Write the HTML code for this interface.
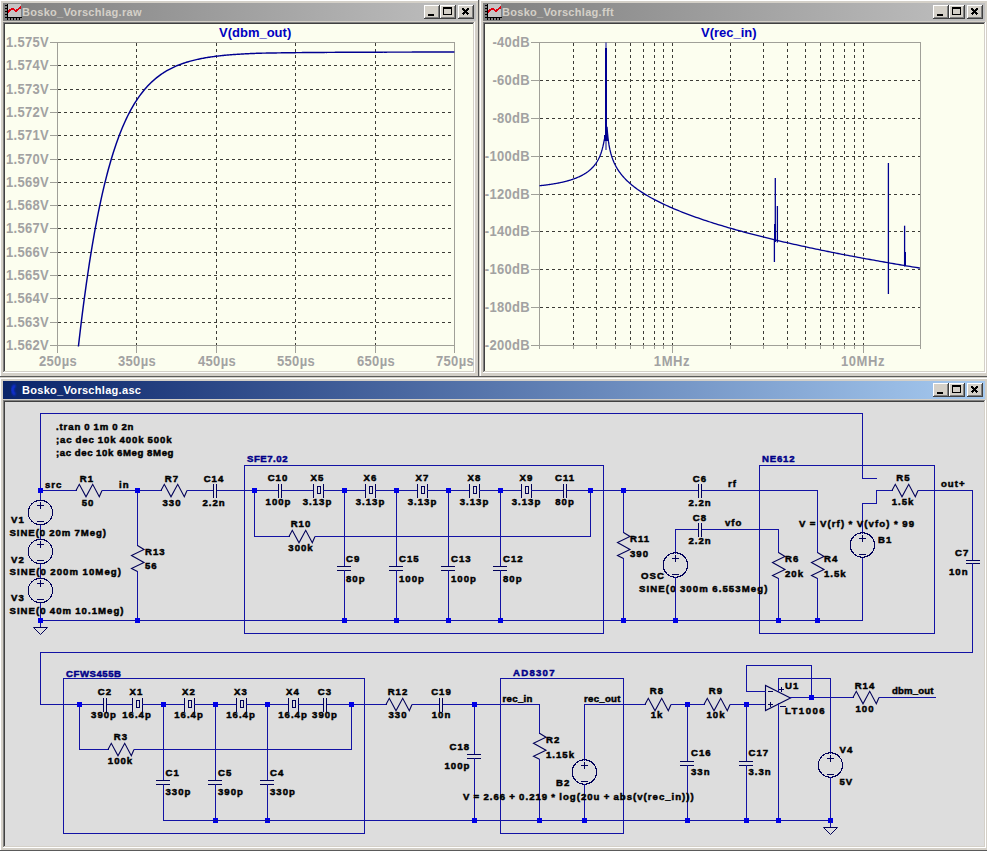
<!DOCTYPE html>
<html><head><meta charset="utf-8"><style>
html,body{margin:0;padding:0;width:987px;height:851px;overflow:hidden;background:#D4D0C8;}
svg{display:block;}
text{shape-rendering:auto;}
</style></head><body>
<svg width="987" height="851" viewBox="0 0 987 851" font-family="Liberation Sans, sans-serif" shape-rendering="crispEdges">
<rect x="0" y="0" width="987" height="851" fill="#D4D0C8"/>
<rect x="-1" y="-1" width="480" height="378" fill="#D4D0C8"/>
<rect x="-1" y="-1" width="480" height="1" fill="#D4D0C8"/>
<rect x="-1" y="-1" width="1" height="378" fill="#D4D0C8"/>
<rect x="0" y="0" width="478" height="1" fill="#FFFFFF"/>
<rect x="0" y="0" width="1" height="376" fill="#FFFFFF"/>
<rect x="-1" y="376" width="480" height="1" fill="#5A5A5A"/>
<rect x="478" y="-1" width="1" height="378" fill="#5A5A5A"/>
<defs><linearGradient id="g1" x1="0" x2="1" y1="0" y2="0"><stop offset="0" stop-color="#808080"/><stop offset="1" stop-color="#C0C0C0"/></linearGradient></defs>
<rect x="3" y="3" width="473" height="18" fill="url(#g1)"/>
<text x="22" y="16" font-size="11" fill="#D4D0C8" text-anchor="start" letter-spacing="0.3" font-weight="bold" >Bosko_Vorschlag.raw</text>
<rect x="458" y="5" width="16" height="14" fill="#D4D0C8"/>
<rect x="458" y="5" width="16" height="1" fill="#FFFFFF"/>
<rect x="458" y="5" width="1" height="14" fill="#FFFFFF"/>
<rect x="458" y="18" width="16" height="1" fill="#404040"/>
<rect x="473" y="5" width="1" height="14" fill="#404040"/>
<rect x="459" y="17" width="14" height="1" fill="#808080"/>
<rect x="472" y="6" width="1" height="12" fill="#808080"/>
<path d="M462.5 8.5 L468.5 14.5 M468.5 8.5 L462.5 14.5" stroke="#000" stroke-width="1.6"/>
<rect x="440" y="5" width="16" height="14" fill="#D4D0C8"/>
<rect x="440" y="5" width="16" height="1" fill="#FFFFFF"/>
<rect x="440" y="5" width="1" height="14" fill="#FFFFFF"/>
<rect x="440" y="18" width="16" height="1" fill="#404040"/>
<rect x="455" y="5" width="1" height="14" fill="#404040"/>
<rect x="441" y="17" width="14" height="1" fill="#808080"/>
<rect x="454" y="6" width="1" height="12" fill="#808080"/>
<rect x="443.5" y="7.5" width="8" height="7" fill="none" stroke="#000" stroke-width="1"/>
<rect x="443" y="7" width="9" height="2" fill="#000"/>
<rect x="424" y="5" width="16" height="14" fill="#D4D0C8"/>
<rect x="424" y="5" width="16" height="1" fill="#FFFFFF"/>
<rect x="424" y="5" width="1" height="14" fill="#FFFFFF"/>
<rect x="424" y="18" width="16" height="1" fill="#404040"/>
<rect x="439" y="5" width="1" height="14" fill="#404040"/>
<rect x="425" y="17" width="14" height="1" fill="#808080"/>
<rect x="438" y="6" width="1" height="12" fill="#808080"/>
<rect x="428" y="14" width="6" height="2" fill="#000"/>
<rect x="8" y="4" width="13" height="13" fill="#C4C4C4"/>
<rect x="7" y="4" width="1" height="16" fill="#000"/>
<rect x="5" y="17" width="17" height="1" fill="#000"/>
<rect x="5" y="5" width="2" height="1" fill="#000"/>
<rect x="5" y="8" width="2" height="1" fill="#000"/>
<rect x="5" y="11" width="2" height="1" fill="#000"/>
<rect x="5" y="14" width="2" height="1" fill="#000"/>
<rect x="7" y="18" width="1" height="2" fill="#000"/>
<rect x="10" y="18" width="1" height="2" fill="#000"/>
<rect x="13" y="18" width="1" height="2" fill="#000"/>
<rect x="16" y="18" width="1" height="2" fill="#000"/>
<rect x="19" y="18" width="1" height="2" fill="#000"/>
<path d="M8 12 L12 8.5 L16 11 L21 7" stroke="#E00010" stroke-width="1.8" fill="none"/>
<rect x="3" y="22" width="472" height="351" fill="#D4D0C8"/>
<rect x="3" y="22" width="472" height="1" fill="#808080"/>
<rect x="3" y="22" width="1" height="351" fill="#808080"/>
<rect x="4" y="23" width="470" height="1" fill="#404040"/>
<rect x="4" y="23" width="1" height="349" fill="#404040"/>
<rect x="3" y="372" width="472" height="1" fill="#FFFFFF"/>
<rect x="474" y="22" width="1" height="351" fill="#FFFFFF"/>
<rect x="4" y="371" width="470" height="1" fill="#D4D0C8"/>
<rect x="473" y="23" width="1" height="349" fill="#D4D0C8"/>
<rect x="5" y="24" width="468" height="347" fill="#FCFEEF"/>
<rect x="479" y="-1" width="512" height="378" fill="#D4D0C8"/>
<rect x="479" y="-1" width="512" height="1" fill="#D4D0C8"/>
<rect x="479" y="-1" width="1" height="378" fill="#D4D0C8"/>
<rect x="480" y="0" width="510" height="1" fill="#FFFFFF"/>
<rect x="480" y="0" width="1" height="376" fill="#FFFFFF"/>
<rect x="479" y="376" width="512" height="1" fill="#5A5A5A"/>
<rect x="990" y="-1" width="1" height="378" fill="#5A5A5A"/>
<defs><linearGradient id="g2" x1="0" x2="1" y1="0" y2="0"><stop offset="0" stop-color="#808080"/><stop offset="1" stop-color="#C0C0C0"/></linearGradient></defs>
<rect x="483" y="3" width="502" height="18" fill="url(#g2)"/>
<text x="502" y="16" font-size="11" fill="#D4D0C8" text-anchor="start" letter-spacing="0.3" font-weight="bold" >Bosko_Vorschlag.fft</text>
<rect x="967" y="5" width="16" height="14" fill="#D4D0C8"/>
<rect x="967" y="5" width="16" height="1" fill="#FFFFFF"/>
<rect x="967" y="5" width="1" height="14" fill="#FFFFFF"/>
<rect x="967" y="18" width="16" height="1" fill="#404040"/>
<rect x="982" y="5" width="1" height="14" fill="#404040"/>
<rect x="968" y="17" width="14" height="1" fill="#808080"/>
<rect x="981" y="6" width="1" height="12" fill="#808080"/>
<path d="M971.5 8.5 L977.5 14.5 M977.5 8.5 L971.5 14.5" stroke="#000" stroke-width="1.6"/>
<rect x="949" y="5" width="16" height="14" fill="#D4D0C8"/>
<rect x="949" y="5" width="16" height="1" fill="#FFFFFF"/>
<rect x="949" y="5" width="1" height="14" fill="#FFFFFF"/>
<rect x="949" y="18" width="16" height="1" fill="#404040"/>
<rect x="964" y="5" width="1" height="14" fill="#404040"/>
<rect x="950" y="17" width="14" height="1" fill="#808080"/>
<rect x="963" y="6" width="1" height="12" fill="#808080"/>
<rect x="952.5" y="7.5" width="8" height="7" fill="none" stroke="#000" stroke-width="1"/>
<rect x="952" y="7" width="9" height="2" fill="#000"/>
<rect x="933" y="5" width="16" height="14" fill="#D4D0C8"/>
<rect x="933" y="5" width="16" height="1" fill="#FFFFFF"/>
<rect x="933" y="5" width="1" height="14" fill="#FFFFFF"/>
<rect x="933" y="18" width="16" height="1" fill="#404040"/>
<rect x="948" y="5" width="1" height="14" fill="#404040"/>
<rect x="934" y="17" width="14" height="1" fill="#808080"/>
<rect x="947" y="6" width="1" height="12" fill="#808080"/>
<rect x="937" y="14" width="6" height="2" fill="#000"/>
<rect x="488" y="4" width="13" height="13" fill="#C4C4C4"/>
<rect x="487" y="4" width="1" height="16" fill="#000"/>
<rect x="485" y="17" width="17" height="1" fill="#000"/>
<rect x="485" y="5" width="2" height="1" fill="#000"/>
<rect x="485" y="8" width="2" height="1" fill="#000"/>
<rect x="485" y="11" width="2" height="1" fill="#000"/>
<rect x="485" y="14" width="2" height="1" fill="#000"/>
<rect x="487" y="18" width="1" height="2" fill="#000"/>
<rect x="490" y="18" width="1" height="2" fill="#000"/>
<rect x="493" y="18" width="1" height="2" fill="#000"/>
<rect x="496" y="18" width="1" height="2" fill="#000"/>
<rect x="499" y="18" width="1" height="2" fill="#000"/>
<path d="M488 12 L492 8.5 L496 11 L501 7" stroke="#E00010" stroke-width="1.8" fill="none"/>
<rect x="483" y="22" width="503" height="351" fill="#D4D0C8"/>
<rect x="483" y="22" width="503" height="1" fill="#808080"/>
<rect x="483" y="22" width="1" height="351" fill="#808080"/>
<rect x="484" y="23" width="501" height="1" fill="#404040"/>
<rect x="484" y="23" width="1" height="349" fill="#404040"/>
<rect x="483" y="372" width="503" height="1" fill="#FFFFFF"/>
<rect x="985" y="22" width="1" height="351" fill="#FFFFFF"/>
<rect x="484" y="371" width="501" height="1" fill="#D4D0C8"/>
<rect x="984" y="23" width="1" height="349" fill="#D4D0C8"/>
<rect x="485" y="24" width="499" height="347" fill="#FCFEEF"/>
<rect x="-1" y="377" width="992" height="474" fill="#D4D0C8"/>
<rect x="-1" y="377" width="992" height="1" fill="#D4D0C8"/>
<rect x="-1" y="377" width="1" height="474" fill="#D4D0C8"/>
<rect x="0" y="378" width="990" height="1" fill="#FFFFFF"/>
<rect x="0" y="378" width="1" height="472" fill="#FFFFFF"/>
<rect x="-1" y="850" width="992" height="1" fill="#5A5A5A"/>
<rect x="990" y="377" width="1" height="474" fill="#5A5A5A"/>
<defs><linearGradient id="g3" x1="0" x2="1" y1="0" y2="0"><stop offset="0" stop-color="#0A246A"/><stop offset="1" stop-color="#A6CAF0"/></linearGradient></defs>
<rect x="3" y="381" width="982" height="18" fill="url(#g3)"/>
<text x="22" y="394" font-size="11" fill="#FFFFFF" text-anchor="start" letter-spacing="0.3" font-weight="bold" >Bosko_Vorschlag.asc</text>
<rect x="967" y="383" width="16" height="14" fill="#D4D0C8"/>
<rect x="967" y="383" width="16" height="1" fill="#FFFFFF"/>
<rect x="967" y="383" width="1" height="14" fill="#FFFFFF"/>
<rect x="967" y="396" width="16" height="1" fill="#404040"/>
<rect x="982" y="383" width="1" height="14" fill="#404040"/>
<rect x="968" y="395" width="14" height="1" fill="#808080"/>
<rect x="981" y="384" width="1" height="12" fill="#808080"/>
<path d="M971.5 386.5 L977.5 392.5 M977.5 386.5 L971.5 392.5" stroke="#000" stroke-width="1.6"/>
<rect x="949" y="383" width="16" height="14" fill="#D4D0C8"/>
<rect x="949" y="383" width="16" height="1" fill="#FFFFFF"/>
<rect x="949" y="383" width="1" height="14" fill="#FFFFFF"/>
<rect x="949" y="396" width="16" height="1" fill="#404040"/>
<rect x="964" y="383" width="1" height="14" fill="#404040"/>
<rect x="950" y="395" width="14" height="1" fill="#808080"/>
<rect x="963" y="384" width="1" height="12" fill="#808080"/>
<rect x="952.5" y="385.5" width="8" height="7" fill="none" stroke="#000" stroke-width="1"/>
<rect x="952" y="385" width="9" height="2" fill="#000"/>
<rect x="933" y="383" width="16" height="14" fill="#D4D0C8"/>
<rect x="933" y="383" width="16" height="1" fill="#FFFFFF"/>
<rect x="933" y="383" width="1" height="14" fill="#FFFFFF"/>
<rect x="933" y="396" width="16" height="1" fill="#404040"/>
<rect x="948" y="383" width="1" height="14" fill="#404040"/>
<rect x="934" y="395" width="14" height="1" fill="#808080"/>
<rect x="947" y="384" width="1" height="12" fill="#808080"/>
<rect x="937" y="392" width="6" height="2" fill="#000"/>
<defs><filter id="bl" x="-50%" y="-50%" width="200%" height="200%"><feGaussianBlur stdDeviation="1.2"/></filter></defs>
<path d="M15 385 Q10 390 15 395" stroke="#1030F0" stroke-width="2.5" fill="none" filter="url(#bl)" shape-rendering="auto"/>
<rect x="3" y="400" width="983" height="448" fill="#D4D0C8"/>
<rect x="3" y="400" width="983" height="1" fill="#808080"/>
<rect x="3" y="400" width="1" height="448" fill="#808080"/>
<rect x="4" y="401" width="981" height="1" fill="#404040"/>
<rect x="4" y="401" width="1" height="446" fill="#404040"/>
<rect x="3" y="847" width="983" height="1" fill="#FFFFFF"/>
<rect x="985" y="400" width="1" height="448" fill="#FFFFFF"/>
<rect x="4" y="846" width="981" height="1" fill="#D4D0C8"/>
<rect x="984" y="401" width="1" height="446" fill="#D4D0C8"/>
<rect x="5" y="402" width="979" height="444" fill="#DDDDDD"/>
<rect x="50" y="42" width="8" height="1" fill="#A0A098"/>
<text transform="translate(49 47) scale(1.0 1.07)" x="0" y="0" font-size="13" fill="#A2A2A2" text-anchor="end" letter-spacing="0.3" font-weight="bold" >1.575V</text>
<line x1="58" y1="65.5" x2="454" y2="65.5" stroke="#3C3C36" stroke-width="1" stroke-dasharray="3 3"/>
<rect x="50" y="65" width="8" height="1" fill="#A0A098"/>
<text transform="translate(49 70) scale(1.0 1.07)" x="0" y="0" font-size="13" fill="#A2A2A2" text-anchor="end" letter-spacing="0.3" font-weight="bold" >1.574V</text>
<line x1="58" y1="89.5" x2="454" y2="89.5" stroke="#3C3C36" stroke-width="1" stroke-dasharray="3 3"/>
<rect x="50" y="89" width="8" height="1" fill="#A0A098"/>
<text transform="translate(49 94) scale(1.0 1.07)" x="0" y="0" font-size="13" fill="#A2A2A2" text-anchor="end" letter-spacing="0.3" font-weight="bold" >1.573V</text>
<line x1="58" y1="112.5" x2="454" y2="112.5" stroke="#3C3C36" stroke-width="1" stroke-dasharray="3 3"/>
<rect x="50" y="112" width="8" height="1" fill="#A0A098"/>
<text transform="translate(49 117) scale(1.0 1.07)" x="0" y="0" font-size="13" fill="#A2A2A2" text-anchor="end" letter-spacing="0.3" font-weight="bold" >1.572V</text>
<line x1="58" y1="135.5" x2="454" y2="135.5" stroke="#3C3C36" stroke-width="1" stroke-dasharray="3 3"/>
<rect x="50" y="135" width="8" height="1" fill="#A0A098"/>
<text transform="translate(49 140) scale(1.0 1.07)" x="0" y="0" font-size="13" fill="#A2A2A2" text-anchor="end" letter-spacing="0.3" font-weight="bold" >1.571V</text>
<line x1="58" y1="159.5" x2="454" y2="159.5" stroke="#3C3C36" stroke-width="1" stroke-dasharray="3 3"/>
<rect x="50" y="159" width="8" height="1" fill="#A0A098"/>
<text transform="translate(49 164) scale(1.0 1.07)" x="0" y="0" font-size="13" fill="#A2A2A2" text-anchor="end" letter-spacing="0.3" font-weight="bold" >1.570V</text>
<line x1="58" y1="182.5" x2="454" y2="182.5" stroke="#3C3C36" stroke-width="1" stroke-dasharray="3 3"/>
<rect x="50" y="182" width="8" height="1" fill="#A0A098"/>
<text transform="translate(49 187) scale(1.0 1.07)" x="0" y="0" font-size="13" fill="#A2A2A2" text-anchor="end" letter-spacing="0.3" font-weight="bold" >1.569V</text>
<line x1="58" y1="205.5" x2="454" y2="205.5" stroke="#3C3C36" stroke-width="1" stroke-dasharray="3 3"/>
<rect x="50" y="205" width="8" height="1" fill="#A0A098"/>
<text transform="translate(49 210) scale(1.0 1.07)" x="0" y="0" font-size="13" fill="#A2A2A2" text-anchor="end" letter-spacing="0.3" font-weight="bold" >1.568V</text>
<line x1="58" y1="228.5" x2="454" y2="228.5" stroke="#3C3C36" stroke-width="1" stroke-dasharray="3 3"/>
<rect x="50" y="228" width="8" height="1" fill="#A0A098"/>
<text transform="translate(49 233) scale(1.0 1.07)" x="0" y="0" font-size="13" fill="#A2A2A2" text-anchor="end" letter-spacing="0.3" font-weight="bold" >1.567V</text>
<line x1="58" y1="252.5" x2="454" y2="252.5" stroke="#3C3C36" stroke-width="1" stroke-dasharray="3 3"/>
<rect x="50" y="252" width="8" height="1" fill="#A0A098"/>
<text transform="translate(49 257) scale(1.0 1.07)" x="0" y="0" font-size="13" fill="#A2A2A2" text-anchor="end" letter-spacing="0.3" font-weight="bold" >1.566V</text>
<line x1="58" y1="275.5" x2="454" y2="275.5" stroke="#3C3C36" stroke-width="1" stroke-dasharray="3 3"/>
<rect x="50" y="275" width="8" height="1" fill="#A0A098"/>
<text transform="translate(49 280) scale(1.0 1.07)" x="0" y="0" font-size="13" fill="#A2A2A2" text-anchor="end" letter-spacing="0.3" font-weight="bold" >1.565V</text>
<line x1="58" y1="298.5" x2="454" y2="298.5" stroke="#3C3C36" stroke-width="1" stroke-dasharray="3 3"/>
<rect x="50" y="298" width="8" height="1" fill="#A0A098"/>
<text transform="translate(49 303) scale(1.0 1.07)" x="0" y="0" font-size="13" fill="#A2A2A2" text-anchor="end" letter-spacing="0.3" font-weight="bold" >1.564V</text>
<line x1="58" y1="322.5" x2="454" y2="322.5" stroke="#3C3C36" stroke-width="1" stroke-dasharray="3 3"/>
<rect x="50" y="322" width="8" height="1" fill="#A0A098"/>
<text transform="translate(49 327) scale(1.0 1.07)" x="0" y="0" font-size="13" fill="#A2A2A2" text-anchor="end" letter-spacing="0.3" font-weight="bold" >1.563V</text>
<rect x="50" y="345" width="8" height="1" fill="#A0A098"/>
<text transform="translate(49 350) scale(1.0 1.07)" x="0" y="0" font-size="13" fill="#A2A2A2" text-anchor="end" letter-spacing="0.3" font-weight="bold" >1.562V</text>
<rect x="57" y="345" width="1" height="8" fill="#A0A098"/>
<text transform="translate(58 366) scale(1.0 1.07)" x="0" y="0" font-size="13" fill="#A2A2A2" text-anchor="middle" letter-spacing="0.3" font-weight="bold" >250µs</text>
<line x1="136.5" y1="43" x2="136.5" y2="345" stroke="#3C3C36" stroke-width="1" stroke-dasharray="3 3"/>
<rect x="136" y="345" width="1" height="8" fill="#A0A098"/>
<text transform="translate(137 366) scale(1.0 1.07)" x="0" y="0" font-size="13" fill="#A2A2A2" text-anchor="middle" letter-spacing="0.3" font-weight="bold" >350µs</text>
<line x1="216.5" y1="43" x2="216.5" y2="345" stroke="#3C3C36" stroke-width="1" stroke-dasharray="3 3"/>
<rect x="216" y="345" width="1" height="8" fill="#A0A098"/>
<text transform="translate(217 366) scale(1.0 1.07)" x="0" y="0" font-size="13" fill="#A2A2A2" text-anchor="middle" letter-spacing="0.3" font-weight="bold" >450µs</text>
<line x1="295.5" y1="43" x2="295.5" y2="345" stroke="#3C3C36" stroke-width="1" stroke-dasharray="3 3"/>
<rect x="295" y="345" width="1" height="8" fill="#A0A098"/>
<text transform="translate(296 366) scale(1.0 1.07)" x="0" y="0" font-size="13" fill="#A2A2A2" text-anchor="middle" letter-spacing="0.3" font-weight="bold" >550µs</text>
<line x1="375.5" y1="43" x2="375.5" y2="345" stroke="#3C3C36" stroke-width="1" stroke-dasharray="3 3"/>
<rect x="375" y="345" width="1" height="8" fill="#A0A098"/>
<text transform="translate(376 366) scale(1.0 1.07)" x="0" y="0" font-size="13" fill="#A2A2A2" text-anchor="middle" letter-spacing="0.3" font-weight="bold" >650µs</text>
<rect x="454" y="345" width="1" height="8" fill="#A0A098"/>
<text transform="translate(455 366) scale(1.0 1.07)" x="0" y="0" font-size="13" fill="#A2A2A2" text-anchor="middle" letter-spacing="0.3" font-weight="bold" >750µs</text>
<rect x="57" y="42" width="398" height="1" fill="#A0A098"/>
<rect x="57" y="345" width="398" height="1" fill="#A0A098"/>
<rect x="57" y="42" width="1" height="304" fill="#A0A098"/>
<rect x="454" y="42" width="1" height="304" fill="#A0A098"/>
<text x="219" y="36.6" font-size="13" fill="#0000C0" text-anchor="start" letter-spacing="0" font-weight="bold" >V(dbm_out)</text>
<polyline points="78.4,346.52 79.4,337.84 80.4,329.40 81.4,321.19 82.4,313.21 83.4,305.45 84.4,297.90 85.4,290.57 86.4,283.44 87.4,276.51 88.4,269.77 89.4,263.23 90.4,256.87 91.4,250.69 92.4,244.69 93.4,238.86 94.4,233.20 95.4,227.71 96.4,222.37 97.4,217.18 98.4,212.15 99.4,207.27 100.4,202.53 101.4,197.92 102.4,193.46 103.4,189.12 104.4,184.92 105.4,180.83 106.4,176.87 107.4,173.03 108.4,169.31 109.4,165.69 110.4,162.18 111.4,158.78 112.4,155.49 113.4,152.29 114.4,149.19 115.4,146.18 116.4,143.26 117.4,140.44 118.4,137.69 119.4,135.04 120.4,132.46 121.4,129.97 122.4,127.55 123.4,125.20 124.4,122.93 125.4,120.72 126.4,118.59 127.4,116.52 128.4,114.52 129.4,112.57 130.4,110.69 131.4,108.87 132.4,107.10 133.4,105.39 134.4,103.73 135.4,102.12 136.4,100.57 137.4,99.06 138.4,97.60 139.4,96.18 140.4,94.81 141.4,93.49 142.4,92.20 143.4,90.96 144.4,89.75 145.4,88.58 146.4,87.45 147.4,86.35 148.4,85.29 149.4,84.26 150.4,83.27 151.4,82.30 152.4,81.37 153.4,80.46 154.4,79.59 155.4,78.74 156.4,77.92 157.4,77.12 158.4,76.35 159.4,75.60 160.4,74.88 161.4,74.18 162.4,73.50 163.4,72.84 164.4,72.21 165.4,71.59 166.4,70.99 167.4,70.41 168.4,69.85 169.4,69.31 170.4,68.79 171.4,68.28 172.4,67.78 173.4,67.31 174.4,66.84 175.4,66.40 176.4,65.96 177.4,65.54 178.4,65.13 179.4,64.74 180.4,64.36 181.4,63.99 182.4,63.63 183.4,63.28 184.4,62.94 185.4,62.61 186.4,62.30 187.4,61.99 188.4,61.69 189.4,61.41 190.4,61.13 191.4,60.86 192.4,60.59 193.4,60.34 194.4,60.09 195.4,59.85 196.4,59.62 197.4,59.40 198.4,59.18 199.4,58.97 200.4,58.77 201.4,58.57 202.4,58.37 203.4,58.19 204.4,58.01 205.4,57.83 206.4,57.66 207.4,57.50 208.4,57.34 209.4,57.18 210.4,57.03 211.4,56.89 212.4,56.74 213.4,56.61 214.4,56.47 215.4,56.34 216.4,56.22 217.4,56.10 218.4,55.98 219.4,55.86 220.4,55.75 221.4,55.65 222.4,55.54 223.4,55.44 224.4,55.34 225.4,55.24 226.4,55.15 227.4,55.06 228.4,54.97 229.4,54.89 230.4,54.81 231.4,54.73 232.4,54.65 233.4,54.57 234.4,54.50 235.4,54.43 236.4,54.36 237.4,54.29 238.4,54.23 239.4,54.16 240.4,54.10 241.4,54.04 242.4,53.99 243.4,53.93 244.4,53.87 245.4,53.82 246.4,53.77 247.4,53.72 248.4,53.67 249.4,53.62 250.4,53.58 251.4,53.53 252.4,53.49 253.4,53.45 254.4,53.41 255.4,53.37 256.4,53.33 257.4,53.29 258.4,53.26 259.4,53.22 260.4,53.19 261.4,53.17 262.4,53.15 263.4,53.13 264.4,53.12 265.4,53.10 266.4,53.08 267.4,53.06 268.4,53.04 269.4,53.03 270.4,53.01 271.4,52.99 272.4,52.98 273.4,52.96 274.4,52.94 275.4,52.93 276.4,52.91 277.4,52.90 278.4,52.88 279.4,52.87 280.4,52.85 281.4,52.84 282.4,52.83 283.4,52.81 284.4,52.80 285.4,52.79 286.4,52.77 287.4,52.76 288.4,52.75 289.4,52.74 290.4,52.72 291.4,52.71 292.4,52.70 293.4,52.69 294.4,52.68 295.4,52.67 296.4,52.65 297.4,52.64 298.4,52.63 299.4,52.62 300.4,52.61 301.4,52.60 302.4,52.59 303.4,52.58 304.4,52.57 305.4,52.56 306.4,52.55 307.4,52.54 308.4,52.54 309.4,52.53 310.4,52.52 311.4,52.51 312.4,52.50 313.4,52.49 314.4,52.48 315.4,52.48 316.4,52.47 317.4,52.46 318.4,52.45 319.4,52.45 320.4,52.44 321.4,52.43 322.4,52.42 323.4,52.42 324.4,52.41 325.4,52.40 326.4,52.40 327.4,52.39 328.4,52.38 329.4,52.38 330.4,52.37 331.4,52.37 332.4,52.36 333.4,52.35 334.4,52.35 335.4,52.34 336.4,52.34 337.4,52.33 338.4,52.33 339.4,52.32 340.4,52.31 341.4,52.31 342.4,52.30 343.4,52.30 344.4,52.29 345.4,52.29 346.4,52.28 347.4,52.28 348.4,52.28 349.4,52.27 350.4,52.27 351.4,52.26 352.4,52.26 353.4,52.25 354.4,52.25 355.4,52.24 356.4,52.24 357.4,52.24 358.4,52.23 359.4,52.23 360.4,52.23 361.4,52.22 362.4,52.22 363.4,52.21 364.4,52.21 365.4,52.21 366.4,52.20 367.4,52.20 368.4,52.20 369.4,52.19 370.4,52.19 371.4,52.19 372.4,52.18 373.4,52.18 374.4,52.18 375.4,52.18 376.4,52.17 377.4,52.17 378.4,52.17 379.4,52.16 380.4,52.16 381.4,52.16 382.4,52.16 383.4,52.15 384.4,52.15 385.4,52.15 386.4,52.15 387.4,52.14 388.4,52.14 389.4,52.14 390.4,52.14 391.4,52.13 392.4,52.13 393.4,52.13 394.4,52.13 395.4,52.13 396.4,52.12 397.4,52.12 398.4,52.12 399.4,52.12 400.4,52.12 401.4,52.11 402.4,52.11 403.4,52.11 404.4,52.11 405.4,52.11 406.4,52.10 407.4,52.10 408.4,52.10 409.4,52.10 410.4,52.10 411.4,52.10 412.4,52.09 413.4,52.09 414.4,52.09 415.4,52.09 416.4,52.09 417.4,52.09 418.4,52.09 419.4,52.08 420.4,52.08 421.4,52.08 422.4,52.08 423.4,52.08 424.4,52.08 425.4,52.08 426.4,52.07 427.4,52.07 428.4,52.07 429.4,52.07 430.4,52.07 431.4,52.07 432.4,52.07 433.4,52.07 434.4,52.07 435.4,52.06 436.4,52.06 437.4,52.06 438.4,52.06 439.4,52.06 440.4,52.06 441.4,52.06 442.4,52.06 443.4,52.06 444.4,52.06 445.4,52.05 446.4,52.05 447.4,52.05 448.4,52.05 449.4,52.05 450.4,52.05 451.4,52.05 452.4,52.05 453.4,52.05 454.4,52.05" fill="none" stroke="#000090" stroke-width="1.45" shape-rendering="auto"/>
<rect x="531" y="42" width="9" height="1" fill="#A0A098"/>
<text transform="translate(530 47) scale(1.0 1.07)" x="0" y="0" font-size="13" fill="#A2A2A2" text-anchor="end" letter-spacing="0.3" font-weight="bold" >-40dB</text>
<line x1="540" y1="80.5" x2="920" y2="80.5" stroke="#3C3C36" stroke-width="1" stroke-dasharray="3 3"/>
<rect x="531" y="80" width="9" height="1" fill="#A0A098"/>
<text transform="translate(530 85) scale(1.0 1.07)" x="0" y="0" font-size="13" fill="#A2A2A2" text-anchor="end" letter-spacing="0.3" font-weight="bold" >-60dB</text>
<line x1="540" y1="118.5" x2="920" y2="118.5" stroke="#3C3C36" stroke-width="1" stroke-dasharray="3 3"/>
<rect x="531" y="118" width="9" height="1" fill="#A0A098"/>
<text transform="translate(530 123) scale(1.0 1.07)" x="0" y="0" font-size="13" fill="#A2A2A2" text-anchor="end" letter-spacing="0.3" font-weight="bold" >-80dB</text>
<line x1="540" y1="156.5" x2="920" y2="156.5" stroke="#3C3C36" stroke-width="1" stroke-dasharray="3 3"/>
<rect x="531" y="156" width="9" height="1" fill="#A0A098"/>
<text transform="translate(530 161) scale(1.0 1.07)" x="0" y="0" font-size="13" fill="#A2A2A2" text-anchor="end" letter-spacing="0.3" font-weight="bold" >-100dB</text>
<line x1="540" y1="194.5" x2="920" y2="194.5" stroke="#3C3C36" stroke-width="1" stroke-dasharray="3 3"/>
<rect x="531" y="194" width="9" height="1" fill="#A0A098"/>
<text transform="translate(530 199) scale(1.0 1.07)" x="0" y="0" font-size="13" fill="#A2A2A2" text-anchor="end" letter-spacing="0.3" font-weight="bold" >-120dB</text>
<line x1="540" y1="231.5" x2="920" y2="231.5" stroke="#3C3C36" stroke-width="1" stroke-dasharray="3 3"/>
<rect x="531" y="231" width="9" height="1" fill="#A0A098"/>
<text transform="translate(530 236) scale(1.0 1.07)" x="0" y="0" font-size="13" fill="#A2A2A2" text-anchor="end" letter-spacing="0.3" font-weight="bold" >-140dB</text>
<line x1="540" y1="269.5" x2="920" y2="269.5" stroke="#3C3C36" stroke-width="1" stroke-dasharray="3 3"/>
<rect x="531" y="269" width="9" height="1" fill="#A0A098"/>
<text transform="translate(530 274) scale(1.0 1.07)" x="0" y="0" font-size="13" fill="#A2A2A2" text-anchor="end" letter-spacing="0.3" font-weight="bold" >-160dB</text>
<line x1="540" y1="307.5" x2="920" y2="307.5" stroke="#3C3C36" stroke-width="1" stroke-dasharray="3 3"/>
<rect x="531" y="307" width="9" height="1" fill="#A0A098"/>
<text transform="translate(530 312) scale(1.0 1.07)" x="0" y="0" font-size="13" fill="#A2A2A2" text-anchor="end" letter-spacing="0.3" font-weight="bold" >-180dB</text>
<rect x="531" y="345" width="9" height="1" fill="#A0A098"/>
<text transform="translate(530 350) scale(1.0 1.07)" x="0" y="0" font-size="13" fill="#A2A2A2" text-anchor="end" letter-spacing="0.3" font-weight="bold" >-200dB</text>
<line x1="573.5" y1="43" x2="573.5" y2="345" stroke="#3C3C36" stroke-width="1" stroke-dasharray="3 3"/>
<rect x="573" y="345" width="1" height="4" fill="#A0A098"/>
<line x1="596.5" y1="43" x2="596.5" y2="345" stroke="#3C3C36" stroke-width="1" stroke-dasharray="3 3"/>
<rect x="596" y="345" width="1" height="4" fill="#A0A098"/>
<line x1="615.5" y1="43" x2="615.5" y2="345" stroke="#3C3C36" stroke-width="1" stroke-dasharray="3 3"/>
<rect x="615" y="345" width="1" height="4" fill="#A0A098"/>
<line x1="630.5" y1="43" x2="630.5" y2="345" stroke="#3C3C36" stroke-width="1" stroke-dasharray="3 3"/>
<rect x="630" y="345" width="1" height="4" fill="#A0A098"/>
<line x1="643.5" y1="43" x2="643.5" y2="345" stroke="#3C3C36" stroke-width="1" stroke-dasharray="3 3"/>
<rect x="643" y="345" width="1" height="4" fill="#A0A098"/>
<line x1="654.5" y1="43" x2="654.5" y2="345" stroke="#3C3C36" stroke-width="1" stroke-dasharray="3 3"/>
<rect x="654" y="345" width="1" height="4" fill="#A0A098"/>
<line x1="663.5" y1="43" x2="663.5" y2="345" stroke="#3C3C36" stroke-width="1" stroke-dasharray="3 3"/>
<rect x="663" y="345" width="1" height="4" fill="#A0A098"/>
<line x1="672.5" y1="43" x2="672.5" y2="345" stroke="#3C3C36" stroke-width="1" stroke-dasharray="3 3"/>
<rect x="672" y="345" width="1" height="8" fill="#A0A098"/>
<line x1="730.5" y1="43" x2="730.5" y2="345" stroke="#3C3C36" stroke-width="1" stroke-dasharray="3 3"/>
<rect x="730" y="345" width="1" height="4" fill="#A0A098"/>
<line x1="763.5" y1="43" x2="763.5" y2="345" stroke="#3C3C36" stroke-width="1" stroke-dasharray="3 3"/>
<rect x="763" y="345" width="1" height="4" fill="#A0A098"/>
<line x1="787.5" y1="43" x2="787.5" y2="345" stroke="#3C3C36" stroke-width="1" stroke-dasharray="3 3"/>
<rect x="787" y="345" width="1" height="4" fill="#A0A098"/>
<line x1="805.5" y1="43" x2="805.5" y2="345" stroke="#3C3C36" stroke-width="1" stroke-dasharray="3 3"/>
<rect x="805" y="345" width="1" height="4" fill="#A0A098"/>
<line x1="820.5" y1="43" x2="820.5" y2="345" stroke="#3C3C36" stroke-width="1" stroke-dasharray="3 3"/>
<rect x="820" y="345" width="1" height="4" fill="#A0A098"/>
<line x1="833.5" y1="43" x2="833.5" y2="345" stroke="#3C3C36" stroke-width="1" stroke-dasharray="3 3"/>
<rect x="833" y="345" width="1" height="4" fill="#A0A098"/>
<line x1="844.5" y1="43" x2="844.5" y2="345" stroke="#3C3C36" stroke-width="1" stroke-dasharray="3 3"/>
<rect x="844" y="345" width="1" height="4" fill="#A0A098"/>
<line x1="854.5" y1="43" x2="854.5" y2="345" stroke="#3C3C36" stroke-width="1" stroke-dasharray="3 3"/>
<rect x="854" y="345" width="1" height="4" fill="#A0A098"/>
<line x1="863.5" y1="43" x2="863.5" y2="345" stroke="#3C3C36" stroke-width="1" stroke-dasharray="3 3"/>
<rect x="863" y="345" width="1" height="8" fill="#A0A098"/>
<rect x="539" y="345" width="1" height="4" fill="#A0A098"/>
<rect x="920" y="345" width="1" height="4" fill="#A0A098"/>
<text transform="translate(672 366) scale(1.0 1.07)" x="0" y="0" font-size="13" fill="#A2A2A2" text-anchor="middle" letter-spacing="0.6" font-weight="bold" >1MHz</text>
<text transform="translate(863 366) scale(1.0 1.07)" x="0" y="0" font-size="13" fill="#A2A2A2" text-anchor="middle" letter-spacing="0.6" font-weight="bold" >10MHz</text>
<rect x="539" y="42" width="382" height="1" fill="#A0A098"/>
<rect x="539" y="345" width="382" height="1" fill="#A0A098"/>
<rect x="539" y="42" width="1" height="304" fill="#A0A098"/>
<rect x="920" y="42" width="1" height="304" fill="#A0A098"/>
<text x="701" y="36.6" font-size="13" fill="#0000C0" text-anchor="start" letter-spacing="0" font-weight="bold" >V(rec_in)</text>
<path d="M539.50 185.73 L540.00 185.68 L540.50 185.63 L541.00 185.58 L541.50 185.52 L542.00 185.47 L542.50 185.41 L543.00 185.35 L543.50 185.29 L544.00 185.24 L544.50 185.18 L545.00 185.11 L545.50 185.05 L546.00 184.99 L546.50 184.92 L547.00 184.86 L547.50 184.79 L548.00 184.72 L548.50 184.66 L549.00 184.58 L549.50 184.51 L550.00 184.44 L550.50 184.37 L551.00 184.29 L551.50 184.22 L552.00 184.14 L552.50 184.06 L553.00 183.98 L553.50 183.90 L554.00 183.81 L554.50 183.73 L555.00 183.64 L555.50 183.55 L556.00 183.46 L556.50 183.37 L557.00 183.28 L557.50 183.19 L558.00 183.09 L558.50 182.99 L559.00 182.89 L559.50 182.79 L560.00 182.69 L560.50 182.58 L561.00 182.48 L561.50 182.37 L562.00 182.26 L562.50 182.14 L563.00 182.03 L563.50 181.91 L564.00 181.79 L564.50 181.67 L565.00 181.55 L565.50 181.42 L566.00 181.29 L566.50 181.16 L567.00 181.02 L567.50 180.89 L568.00 180.75 L568.50 180.61 L569.00 180.46 L569.50 180.31 L570.00 180.16 L570.50 180.01 L571.00 179.85 L571.50 179.69 L572.00 179.53 L572.50 179.36 L573.00 179.19 L573.50 179.01 L574.00 178.83 L574.50 178.65 L575.00 178.46 L575.50 178.27 L576.00 178.08 L576.50 177.88 L577.00 177.68 L577.50 177.47 L578.00 177.25 L578.50 177.03 L579.00 176.81 L579.50 176.58 L580.00 176.34 L580.50 176.10 L581.00 175.85 L581.50 175.60 L582.00 175.34 L582.50 175.07 L583.00 174.79 L583.50 174.51 L584.00 174.22 L584.50 173.92 L585.00 173.61 L585.50 173.30 L586.00 172.97 L586.50 172.63 L587.00 172.28 L587.50 171.93 L588.00 171.56 L588.50 171.17 L589.00 170.78 L589.50 170.37 L590.00 169.94 L590.50 169.50 L591.00 169.05 L591.50 168.57 L592.00 168.08 L592.50 167.57 L593.00 167.03 L593.50 166.47 L594.00 165.89 L594.50 165.28 L595.00 164.64 L595.50 163.97 L596.00 163.26 L596.50 162.51 L597.00 161.73 L597.50 160.89 L598.00 160.00 L598.50 159.06 L599.00 158.05 L599.50 156.97 L600.00 155.80 L600.50 154.54 L601.00 153.17 L601.50 151.67 L602.00 150.02 L602.50 148.20 L603.00 146.19 L603.50 143.94 L604.00 141.47 L604.50 138.81" fill="none" stroke="#000090" stroke-width="1.3" shape-rendering="auto"/>
<path d="M607.00 126.81 L607.50 133.07 L608.00 137.85 L608.50 141.69 L609.00 144.88 L609.50 147.61 L610.00 149.98 L610.50 152.08 L611.00 153.96 L611.50 155.67 L612.00 157.23 L612.50 158.66 L613.00 160.00 L613.50 161.24 L614.00 162.41 L614.50 163.51 L615.00 164.55 L615.50 165.53 L616.00 166.47 L616.50 167.37 L617.00 168.23 L617.50 169.05 L618.00 169.84 L618.50 170.60 L619.00 171.34 L619.50 172.05 L620.00 172.74 L620.50 173.41 L621.00 174.06 L621.50 174.69 L622.00 175.30 L622.50 175.90 L623.00 176.48 L623.50 177.05 L624.00 177.60 L624.50 178.14 L625.00 178.67 L625.50 179.19 L626.00 179.70 L626.50 180.20 L627.00 180.69 L627.50 181.17 L628.00 181.64 L628.50 182.10 L629.00 182.55 L629.50 183.00 L630.00 183.44 L630.50 183.87 L631.00 184.30 L631.50 184.72 L632.00 185.13 L632.50 185.54 L633.00 185.94 L633.50 186.33 L634.00 186.73 L634.50 187.11 L635.00 187.49 L635.50 187.87 L636.00 188.24 L636.50 188.60 L637.00 188.97 L637.50 189.32 L638.00 189.68 L638.50 190.03 L639.00 190.37 L639.50 190.72 L640.00 191.06 L642.00 192.38 L644.00 193.64 L646.00 194.87 L648.00 196.05 L650.00 197.19 L652.00 198.30 L654.00 199.38 L656.00 200.43 L658.00 201.45 L660.00 202.44 L662.00 203.41 L664.00 204.36 L666.00 205.28 L668.00 206.19 L670.00 207.08 L672.00 207.95 L674.00 208.80 L676.00 209.64 L678.00 210.46 L680.00 211.26 L682.00 212.06 L684.00 212.84 L686.00 213.61 L688.00 214.36 L690.00 215.10 L692.00 215.84 L694.00 216.56 L696.00 217.27 L698.00 217.97 L700.00 218.67 L702.00 219.35 L704.00 220.02 L706.00 220.69 L708.00 221.35 L710.00 222.00 L712.00 222.64 L714.00 223.27 L716.00 223.90 L718.00 224.52 L720.00 225.13 L722.00 225.74 L724.00 226.34 L726.00 226.93 L728.00 227.52 L730.00 228.10 L732.00 228.68 L734.00 229.25 L736.00 229.82 L738.00 230.37 L740.00 230.93 L742.00 231.48 L744.00 232.02 L746.00 232.56 L748.00 233.10 L750.00 233.63 L752.00 234.15 L754.00 234.67 L756.00 235.19 L758.00 235.70 L760.00 236.21 L762.00 236.71 L764.00 237.21 L766.00 237.71 L768.00 238.20 L770.00 238.69 L772.00 239.17 L774.00 239.66 L776.00 240.13 L778.00 240.61 L780.00 241.08 L782.00 241.55 L784.00 242.01 L786.00 242.47 L788.00 242.93 L790.00 243.38 L792.00 243.84 L794.00 244.28 L796.00 244.73 L798.00 245.17 L800.00 245.61 L802.00 246.05 L804.00 246.48 L806.00 246.92 L808.00 247.35 L810.00 247.77 L812.00 248.20 L814.00 248.62 L816.00 249.04 L818.00 249.45 L820.00 249.87 L822.00 250.28 L824.00 250.69 L826.00 251.09 L828.00 251.50 L830.00 251.90 L832.00 252.30 L834.00 252.70 L836.00 253.09 L838.00 253.49 L840.00 253.88 L842.00 254.27 L844.00 254.65 L846.00 255.04 L848.00 255.42 L850.00 255.80 L852.00 256.18 L854.00 256.56 L856.00 256.94 L858.00 257.31 L860.00 257.68 L862.00 258.05 L864.00 258.42 L866.00 258.79 L868.00 259.15 L870.00 259.51 L872.00 259.87 L874.00 260.23 L876.00 260.59 L878.00 260.95 L880.00 261.30 L882.00 261.65 L884.00 262.01 L886.00 262.36 L888.00 262.70 L890.00 263.05 L892.00 263.40 L894.00 263.74 L896.00 264.08 L898.00 264.42 L900.00 264.76 L902.00 265.10 L904.00 265.43 L906.00 265.77 L908.00 266.10 L910.00 266.43 L912.00 266.77 L914.00 267.09 L916.00 267.42 L918.00 267.75 L920.00 268.07" fill="none" stroke="#000090" stroke-width="1.3" shape-rendering="auto"/>
<line x1="606" y1="48" x2="606" y2="137" stroke="#000090" stroke-width="2.0" shape-rendering="auto"/>
<line x1="606" y1="42.5" x2="606" y2="150" stroke="#000090" stroke-width="1.0" shape-rendering="auto"/>
<rect x="604" y="135" width="4" height="6" fill="#000090"/>
<line x1="775.3" y1="178" x2="775.3" y2="241" stroke="#000090" stroke-width="1.3" shape-rendering="auto"/>
<line x1="774.4" y1="240" x2="774.4" y2="262" stroke="#000090" stroke-width="1.3" shape-rendering="auto"/>
<line x1="777.4" y1="206" x2="777.4" y2="242.5" stroke="#000090" stroke-width="1.3" shape-rendering="auto"/>
<rect x="774" y="224" width="2" height="18" fill="#000090"/>
<line x1="888.4" y1="163" x2="888.4" y2="294" stroke="#000090" stroke-width="1.3" shape-rendering="auto"/>
<line x1="904.6" y1="225.7" x2="904.6" y2="266.5" stroke="#000090" stroke-width="1.3" shape-rendering="auto"/>
<rect x="904" y="252" width="2" height="14" fill="#000090"/>
<path d="M40.5 413.5 L862.5 413.5 L862.5 478.5 L876.5 478.5" stroke="#1212A4" stroke-width="1" fill="none" stroke-linecap="square"/>
<path d="M40.5 413.5 L40.5 500.5" stroke="#1212A4" stroke-width="1" fill="none" stroke-linecap="square"/>
<path d="M40.5 525.5 L40.5 539.5" stroke="#1212A4" stroke-width="1" fill="none" stroke-linecap="square"/>
<path d="M40.5 564.5 L40.5 578.5" stroke="#1212A4" stroke-width="1" fill="none" stroke-linecap="square"/>
<path d="M40.5 603.5 L40.5 620.5" stroke="#1212A4" stroke-width="1" fill="none" stroke-linecap="square"/>
<circle cx="40.4" cy="512.5" r="12.2" fill="none" stroke="#000058" stroke-width="1.1"/>
<rect x="37" y="505" width="7" height="1" fill="#000058"/>
<rect x="40" y="502" width="1" height="7" fill="#000058"/>
<rect x="37" y="521" width="7" height="1" fill="#000058"/>
<circle cx="40.4" cy="551.5" r="12.2" fill="none" stroke="#000058" stroke-width="1.1"/>
<rect x="37" y="544" width="7" height="1" fill="#000058"/>
<rect x="40" y="541" width="1" height="7" fill="#000058"/>
<rect x="37" y="560" width="7" height="1" fill="#000058"/>
<circle cx="40.4" cy="590.5" r="12.2" fill="none" stroke="#000058" stroke-width="1.1"/>
<rect x="37" y="583" width="7" height="1" fill="#000058"/>
<rect x="40" y="580" width="1" height="7" fill="#000058"/>
<rect x="37" y="599" width="7" height="1" fill="#000058"/>
<rect x="40" y="620" width="1" height="7" fill="#1212A4"/>
<rect x="40" y="620" width="1" height="8" fill="#1212A4"/>
<path d="M33.5 627.5 L47.5 627.5 L40.5 634.5 Z" stroke="#000058" stroke-width="1" fill="none" shape-rendering="auto"/>
<path d="M40.5 490.5 L76.5 490.5" stroke="#1212A4" stroke-width="1" fill="none" stroke-linecap="square"/>
<path d="M76 490.5 L79.3 484.3 L86 496.8 L92.7 484.3 L99.3 496.8 L102 490.5" stroke="#000058" stroke-width="1.1" fill="none" shape-rendering="auto"/>
<path d="M102.5 490.5 L161.5 490.5" stroke="#1212A4" stroke-width="1" fill="none" stroke-linecap="square"/>
<path d="M161 490.5 L164.3 484.3 L171 496.8 L177.7 484.3 L184.3 496.8 L187 490.5" stroke="#000058" stroke-width="1.1" fill="none" shape-rendering="auto"/>
<path d="M187.5 490.5 L213.5 490.5" stroke="#1212A4" stroke-width="1" fill="none" stroke-linecap="square"/>
<rect x="213" y="484" width="1" height="14" fill="#000058"/>
<rect x="216" y="484" width="1" height="14" fill="#000058"/>
<path d="M217.5 490.5 L277.5 490.5" stroke="#1212A4" stroke-width="1" fill="none" stroke-linecap="square"/>
<rect x="278" y="484" width="1" height="14" fill="#000058"/>
<rect x="281" y="484" width="1" height="14" fill="#000058"/>
<path d="M282.5 490.5 L313.5 490.5" stroke="#1212A4" stroke-width="1" fill="none" stroke-linecap="square"/>
<rect x="313" y="484" width="1" height="14" fill="#000058"/>
<rect x="323" y="484" width="1" height="14" fill="#000058"/>
<rect x="317.5" y="486.5" width="3" height="7" fill="none" stroke="#000058" stroke-width="1"/>
<path d="M323.5 490.5 L365.5 490.5" stroke="#1212A4" stroke-width="1" fill="none" stroke-linecap="square"/>
<rect x="365" y="484" width="1" height="14" fill="#000058"/>
<rect x="375" y="484" width="1" height="14" fill="#000058"/>
<rect x="369.5" y="486.5" width="3" height="7" fill="none" stroke="#000058" stroke-width="1"/>
<path d="M375.5 490.5 L417.5 490.5" stroke="#1212A4" stroke-width="1" fill="none" stroke-linecap="square"/>
<rect x="417" y="484" width="1" height="14" fill="#000058"/>
<rect x="427" y="484" width="1" height="14" fill="#000058"/>
<rect x="421.5" y="486.5" width="3" height="7" fill="none" stroke="#000058" stroke-width="1"/>
<path d="M427.5 490.5 L469.5 490.5" stroke="#1212A4" stroke-width="1" fill="none" stroke-linecap="square"/>
<rect x="469" y="484" width="1" height="14" fill="#000058"/>
<rect x="479" y="484" width="1" height="14" fill="#000058"/>
<rect x="473.5" y="486.5" width="3" height="7" fill="none" stroke="#000058" stroke-width="1"/>
<path d="M479.5 490.5 L521.5 490.5" stroke="#1212A4" stroke-width="1" fill="none" stroke-linecap="square"/>
<rect x="521" y="484" width="1" height="14" fill="#000058"/>
<rect x="531" y="484" width="1" height="14" fill="#000058"/>
<rect x="525.5" y="486.5" width="3" height="7" fill="none" stroke="#000058" stroke-width="1"/>
<path d="M531.5 490.5 L563.5 490.5" stroke="#1212A4" stroke-width="1" fill="none" stroke-linecap="square"/>
<rect x="563" y="484" width="1" height="14" fill="#000058"/>
<rect x="566" y="484" width="1" height="14" fill="#000058"/>
<path d="M567.5 490.5 L698.5 490.5" stroke="#1212A4" stroke-width="1" fill="none" stroke-linecap="square"/>
<rect x="698" y="484" width="1" height="14" fill="#000058"/>
<rect x="701" y="484" width="1" height="14" fill="#000058"/>
<path d="M702.5 490.5 L817.5 490.5 L817.5 552.5" stroke="#1212A4" stroke-width="1" fill="none" stroke-linecap="square"/>
<path d="M817.5 552.5 L824.0 556.5 L811.5 562.5 L824.0 569.5 L811.5 575.5 L817.5 578.5" stroke="#000058" stroke-width="1.1" fill="none" shape-rendering="auto"/>
<path d="M817.5 578.5 L817.5 620.5" stroke="#1212A4" stroke-width="1" fill="none" stroke-linecap="square"/>
<path d="M137.5 490.5 L137.5 545.5" stroke="#1212A4" stroke-width="1" fill="none" stroke-linecap="square"/>
<path d="M137.5 545.5 L144.0 549.5 L131.5 555.5 L144.0 562.5 L131.5 568.5 L137.5 571.5" stroke="#000058" stroke-width="1.1" fill="none" shape-rendering="auto"/>
<path d="M137.5 571.5 L137.5 620.5" stroke="#1212A4" stroke-width="1" fill="none" stroke-linecap="square"/>
<path d="M40.5 620.5 L862.5 620.5 L862.5 557.5" stroke="#1212A4" stroke-width="1" fill="none" stroke-linecap="square"/>
<rect x="244.5" y="465.5" width="359" height="168" fill="none" stroke="#1212A4" stroke-width="1"/>
<text transform="translate(247 461.5) scale(0.96 0.95)" x="0" y="0" font-size="10" fill="#000088" stroke="#000088" stroke-width="0.5" textLength="43.23" lengthAdjust="spacing" text-anchor="start" letter-spacing="1.05" font-weight="bold" >SFE7.02</text>
<path d="M254.5 490.5 L254.5 536.5 L289.5 536.5" stroke="#1212A4" stroke-width="1" fill="none" stroke-linecap="square"/>
<path d="M289 536.5 L292.3 530.3 L299 542.8 L305.7 530.3 L312.3 542.8 L315 536.5" stroke="#000058" stroke-width="1.1" fill="none" shape-rendering="auto"/>
<path d="M315.5 536.5 L590.5 536.5 L590.5 490.5" stroke="#1212A4" stroke-width="1" fill="none" stroke-linecap="square"/>
<path d="M344.5 490.5 L344.5 566.5" stroke="#1212A4" stroke-width="1" fill="none" stroke-linecap="square"/>
<rect x="337" y="566" width="14" height="1" fill="#000058"/>
<rect x="337" y="570" width="14" height="1" fill="#000058"/>
<path d="M344.5 570.5 L344.5 620.5" stroke="#1212A4" stroke-width="1" fill="none" stroke-linecap="square"/>
<rect x="342" y="488" width="5" height="5" fill="#0000E8"/>
<rect x="342" y="618" width="5" height="5" fill="#0000E8"/>
<path d="M396.5 490.5 L396.5 566.5" stroke="#1212A4" stroke-width="1" fill="none" stroke-linecap="square"/>
<rect x="389" y="566" width="14" height="1" fill="#000058"/>
<rect x="389" y="570" width="14" height="1" fill="#000058"/>
<path d="M396.5 570.5 L396.5 620.5" stroke="#1212A4" stroke-width="1" fill="none" stroke-linecap="square"/>
<rect x="394" y="488" width="5" height="5" fill="#0000E8"/>
<rect x="394" y="618" width="5" height="5" fill="#0000E8"/>
<path d="M448.5 490.5 L448.5 566.5" stroke="#1212A4" stroke-width="1" fill="none" stroke-linecap="square"/>
<rect x="441" y="566" width="14" height="1" fill="#000058"/>
<rect x="441" y="570" width="14" height="1" fill="#000058"/>
<path d="M448.5 570.5 L448.5 620.5" stroke="#1212A4" stroke-width="1" fill="none" stroke-linecap="square"/>
<rect x="446" y="488" width="5" height="5" fill="#0000E8"/>
<rect x="446" y="618" width="5" height="5" fill="#0000E8"/>
<path d="M500.5 490.5 L500.5 566.5" stroke="#1212A4" stroke-width="1" fill="none" stroke-linecap="square"/>
<rect x="493" y="566" width="14" height="1" fill="#000058"/>
<rect x="493" y="570" width="14" height="1" fill="#000058"/>
<path d="M500.5 570.5 L500.5 620.5" stroke="#1212A4" stroke-width="1" fill="none" stroke-linecap="square"/>
<rect x="498" y="488" width="5" height="5" fill="#0000E8"/>
<rect x="498" y="618" width="5" height="5" fill="#0000E8"/>
<rect x="252" y="488" width="5" height="5" fill="#0000E8"/>
<rect x="588" y="488" width="5" height="5" fill="#0000E8"/>
<rect x="38" y="488" width="5" height="5" fill="#0000E8"/>
<rect x="135" y="488" width="5" height="5" fill="#0000E8"/>
<rect x="38" y="618" width="5" height="5" fill="#0000E8"/>
<rect x="135" y="618" width="5" height="5" fill="#0000E8"/>
<path d="M623.5 490.5 L623.5 532.5" stroke="#1212A4" stroke-width="1" fill="none" stroke-linecap="square"/>
<path d="M623.5 532.5 L630.0 536.5 L617.5 542.5 L630.0 549.5 L617.5 555.5 L623.5 558.5" stroke="#000058" stroke-width="1.1" fill="none" shape-rendering="auto"/>
<path d="M623.5 558.5 L623.5 620.5" stroke="#1212A4" stroke-width="1" fill="none" stroke-linecap="square"/>
<rect x="621" y="488" width="5" height="5" fill="#0000E8"/>
<rect x="621" y="618" width="5" height="5" fill="#0000E8"/>
<path d="M675.5 529.5 L675.5 553.5" stroke="#1212A4" stroke-width="1" fill="none" stroke-linecap="square"/>
<circle cx="675.4" cy="565" r="12.2" fill="none" stroke="#000058" stroke-width="1.1"/>
<rect x="672" y="558" width="7" height="1" fill="#000058"/>
<rect x="675" y="555" width="1" height="7" fill="#000058"/>
<rect x="672" y="574" width="7" height="1" fill="#000058"/>
<path d="M675.5 577.5 L675.5 620.5" stroke="#1212A4" stroke-width="1" fill="none" stroke-linecap="square"/>
<rect x="673" y="618" width="5" height="5" fill="#0000E8"/>
<path d="M675.5 529.5 L698.5 529.5" stroke="#1212A4" stroke-width="1" fill="none" stroke-linecap="square"/>
<rect x="698" y="523" width="1" height="14" fill="#000058"/>
<rect x="701" y="523" width="1" height="14" fill="#000058"/>
<path d="M702.5 529.5 L778.5 529.5 L778.5 552.5" stroke="#1212A4" stroke-width="1" fill="none" stroke-linecap="square"/>
<path d="M778.5 552.5 L785.0 556.5 L772.5 562.5 L785.0 569.5 L772.5 575.5 L778.5 578.5" stroke="#000058" stroke-width="1.1" fill="none" shape-rendering="auto"/>
<path d="M778.5 578.5 L778.5 620.5" stroke="#1212A4" stroke-width="1" fill="none" stroke-linecap="square"/>
<rect x="776" y="618" width="5" height="5" fill="#0000E8"/>
<rect x="815" y="618" width="5" height="5" fill="#0000E8"/>
<rect x="759.5" y="465.5" width="175" height="168" fill="none" stroke="#1212A4" stroke-width="1"/>
<text transform="translate(762 461.5) scale(0.96 0.95)" x="0" y="0" font-size="10" fill="#000088" stroke="#000088" stroke-width="0.5" textLength="34.90" lengthAdjust="spacing" text-anchor="start" letter-spacing="1.05" font-weight="bold" >NE612</text>
<path d="M876.5 490.5 L892.5 490.5" stroke="#1212A4" stroke-width="1" fill="none" stroke-linecap="square"/>
<path d="M892 490.5 L895.3 484.3 L902 496.8 L908.7 484.3 L915.3 496.8 L918 490.5" stroke="#000058" stroke-width="1.1" fill="none" shape-rendering="auto"/>
<path d="M918.5 490.5 L972.5 490.5 L972.5 559.5" stroke="#1212A4" stroke-width="1" fill="none" stroke-linecap="square"/>
<path d="M876.5 490.5 L876.5 503.5 L862.5 503.5 L862.5 533.5" stroke="#1212A4" stroke-width="1" fill="none" stroke-linecap="square"/>
<circle cx="862.4" cy="545" r="12.2" fill="none" stroke="#000058" stroke-width="1.1"/>
<rect x="859" y="538" width="7" height="1" fill="#000058"/>
<rect x="862" y="535" width="1" height="7" fill="#000058"/>
<rect x="859" y="554" width="7" height="1" fill="#000058"/>
<rect x="966" y="560" width="14" height="1" fill="#000058"/>
<rect x="966" y="563" width="14" height="1" fill="#000058"/>
<path d="M972.5 563.5 L972.5 652.5 L40.5 652.5 L40.5 704.5" stroke="#1212A4" stroke-width="1" fill="none" stroke-linecap="square"/>
<path d="M40.5 704.5 L103.5 704.5" stroke="#1212A4" stroke-width="1" fill="none" stroke-linecap="square"/>
<rect x="103" y="698" width="1" height="14" fill="#000058"/>
<rect x="106" y="698" width="1" height="14" fill="#000058"/>
<path d="M107.5 704.5 L132.5 704.5" stroke="#1212A4" stroke-width="1" fill="none" stroke-linecap="square"/>
<rect x="132" y="698" width="1" height="14" fill="#000058"/>
<rect x="142" y="698" width="1" height="14" fill="#000058"/>
<rect x="136.5" y="700.5" width="3" height="7" fill="none" stroke="#000058" stroke-width="1"/>
<path d="M142.5 704.5 L184.5 704.5" stroke="#1212A4" stroke-width="1" fill="none" stroke-linecap="square"/>
<rect x="184" y="698" width="1" height="14" fill="#000058"/>
<rect x="194" y="698" width="1" height="14" fill="#000058"/>
<rect x="188.5" y="700.5" width="3" height="7" fill="none" stroke="#000058" stroke-width="1"/>
<path d="M194.5 704.5 L236.5 704.5" stroke="#1212A4" stroke-width="1" fill="none" stroke-linecap="square"/>
<rect x="236" y="698" width="1" height="14" fill="#000058"/>
<rect x="246" y="698" width="1" height="14" fill="#000058"/>
<rect x="240.5" y="700.5" width="3" height="7" fill="none" stroke="#000058" stroke-width="1"/>
<path d="M246.5 704.5 L288.5 704.5" stroke="#1212A4" stroke-width="1" fill="none" stroke-linecap="square"/>
<rect x="288" y="698" width="1" height="14" fill="#000058"/>
<rect x="298" y="698" width="1" height="14" fill="#000058"/>
<rect x="292.5" y="700.5" width="3" height="7" fill="none" stroke="#000058" stroke-width="1"/>
<path d="M298.5 704.5 L323.5 704.5" stroke="#1212A4" stroke-width="1" fill="none" stroke-linecap="square"/>
<rect x="323" y="698" width="1" height="14" fill="#000058"/>
<rect x="326" y="698" width="1" height="14" fill="#000058"/>
<path d="M327.5 704.5 L386.5 704.5" stroke="#1212A4" stroke-width="1" fill="none" stroke-linecap="square"/>
<path d="M386 704.5 L389.3 698.3 L396 710.8 L402.7 698.3 L409.3 710.8 L412 704.5" stroke="#000058" stroke-width="1.1" fill="none" shape-rendering="auto"/>
<path d="M412.5 704.5 L439.5 704.5" stroke="#1212A4" stroke-width="1" fill="none" stroke-linecap="square"/>
<rect x="439" y="698" width="1" height="14" fill="#000058"/>
<rect x="442" y="698" width="1" height="14" fill="#000058"/>
<path d="M443.5 704.5 L539.5 704.5 L539.5 733.5" stroke="#1212A4" stroke-width="1" fill="none" stroke-linecap="square"/>
<path d="M539.5 733.2 L546.0 737.2 L533.5 743.2 L546.0 750.2 L533.5 756.2 L539.5 759.2" stroke="#000058" stroke-width="1.1" fill="none" shape-rendering="auto"/>
<path d="M539.5 759.5 L539.5 820.5" stroke="#1212A4" stroke-width="1" fill="none" stroke-linecap="square"/>
<rect x="63.5" y="678.5" width="301" height="155" fill="none" stroke="#1212A4" stroke-width="1"/>
<text transform="translate(66 676.5) scale(0.96 0.95)" x="0" y="0" font-size="10" fill="#000088" stroke="#000088" stroke-width="0.5" textLength="58.33" lengthAdjust="spacing" text-anchor="start" letter-spacing="1.05" font-weight="bold" >CFWS455B</text>
<path d="M79.5 704.5 L79.5 749.5 L108.5 749.5" stroke="#1212A4" stroke-width="1" fill="none" stroke-linecap="square"/>
<path d="M108 749.5 L111.3 743.3 L118 755.8 L124.7 743.3 L131.3 755.8 L134 749.5" stroke="#000058" stroke-width="1.1" fill="none" shape-rendering="auto"/>
<path d="M134.5 749.5 L351.5 749.5 L351.5 704.5" stroke="#1212A4" stroke-width="1" fill="none" stroke-linecap="square"/>
<rect x="77" y="702" width="5" height="5" fill="#0000E8"/>
<rect x="349" y="702" width="5" height="5" fill="#0000E8"/>
<path d="M163.5 704.5 L163.5 779.5" stroke="#1212A4" stroke-width="1" fill="none" stroke-linecap="square"/>
<rect x="156" y="780" width="14" height="1" fill="#000058"/>
<rect x="156" y="784" width="14" height="1" fill="#000058"/>
<path d="M163.5 784.5 L163.5 820.5" stroke="#1212A4" stroke-width="1" fill="none" stroke-linecap="square"/>
<rect x="161" y="702" width="5" height="5" fill="#0000E8"/>
<path d="M215.5 704.5 L215.5 779.5" stroke="#1212A4" stroke-width="1" fill="none" stroke-linecap="square"/>
<rect x="208" y="780" width="14" height="1" fill="#000058"/>
<rect x="208" y="784" width="14" height="1" fill="#000058"/>
<path d="M215.5 784.5 L215.5 820.5" stroke="#1212A4" stroke-width="1" fill="none" stroke-linecap="square"/>
<rect x="213" y="702" width="5" height="5" fill="#0000E8"/>
<path d="M267.5 704.5 L267.5 779.5" stroke="#1212A4" stroke-width="1" fill="none" stroke-linecap="square"/>
<rect x="260" y="780" width="14" height="1" fill="#000058"/>
<rect x="260" y="784" width="14" height="1" fill="#000058"/>
<path d="M267.5 784.5 L267.5 820.5" stroke="#1212A4" stroke-width="1" fill="none" stroke-linecap="square"/>
<rect x="265" y="702" width="5" height="5" fill="#0000E8"/>
<rect x="213" y="818" width="5" height="5" fill="#0000E8"/>
<rect x="265" y="818" width="5" height="5" fill="#0000E8"/>
<path d="M163.5 820.5 L831.5 820.5" stroke="#1212A4" stroke-width="1" fill="none" stroke-linecap="square"/>
<path d="M474.5 704.5 L474.5 754.5" stroke="#1212A4" stroke-width="1" fill="none" stroke-linecap="square"/>
<rect x="467" y="754" width="14" height="1" fill="#000058"/>
<rect x="467" y="758" width="14" height="1" fill="#000058"/>
<path d="M474.5 758.5 L474.5 820.5" stroke="#1212A4" stroke-width="1" fill="none" stroke-linecap="square"/>
<rect x="472" y="702" width="5" height="5" fill="#0000E8"/>
<rect x="472" y="818" width="5" height="5" fill="#0000E8"/>
<rect x="537" y="818" width="5" height="5" fill="#0000E8"/>
<rect x="500.5" y="678.5" width="123" height="155" fill="none" stroke="#1212A4" stroke-width="1"/>
<text transform="translate(513 675.5) scale(0.96 0.95)" x="0" y="0" font-size="10" fill="#000088" stroke="#000088" stroke-width="0.5" textLength="44.27" lengthAdjust="spacing" text-anchor="start" letter-spacing="1.05" font-weight="bold" >AD8307</text>
<path d="M584.5 760.5 L584.5 704.5 L645.5 704.5" stroke="#1212A4" stroke-width="1" fill="none" stroke-linecap="square"/>
<circle cx="584.4" cy="772" r="12.2" fill="none" stroke="#000058" stroke-width="1.1"/>
<rect x="581" y="765" width="7" height="1" fill="#000058"/>
<rect x="584" y="762" width="1" height="7" fill="#000058"/>
<rect x="581" y="781" width="7" height="1" fill="#000058"/>
<path d="M584.5 784.5 L584.5 820.5" stroke="#1212A4" stroke-width="1" fill="none" stroke-linecap="square"/>
<rect x="582" y="818" width="5" height="5" fill="#0000E8"/>
<path d="M645 704.5 L648.3 698.3 L655 710.8 L661.7 698.3 L668.3 710.8 L671 704.5" stroke="#000058" stroke-width="1.1" fill="none" shape-rendering="auto"/>
<path d="M671.5 704.5 L704.5 704.5" stroke="#1212A4" stroke-width="1" fill="none" stroke-linecap="square"/>
<path d="M704 704.5 L707.3 698.3 L714 710.8 L720.7 698.3 L727.3 710.8 L730 704.5" stroke="#000058" stroke-width="1.1" fill="none" shape-rendering="auto"/>
<path d="M730.5 704.5 L765.5 704.5" stroke="#1212A4" stroke-width="1" fill="none" stroke-linecap="square"/>
<rect x="685" y="702" width="5" height="5" fill="#0000E8"/>
<rect x="744" y="702" width="5" height="5" fill="#0000E8"/>
<path d="M687.5 704.5 L687.5 761.5" stroke="#1212A4" stroke-width="1" fill="none" stroke-linecap="square"/>
<rect x="680" y="761" width="14" height="1" fill="#000058"/>
<rect x="680" y="765" width="14" height="1" fill="#000058"/>
<path d="M687.5 765.5 L687.5 820.5" stroke="#1212A4" stroke-width="1" fill="none" stroke-linecap="square"/>
<rect x="685" y="818" width="5" height="5" fill="#0000E8"/>
<path d="M746.5 704.5 L746.5 761.5" stroke="#1212A4" stroke-width="1" fill="none" stroke-linecap="square"/>
<rect x="739" y="761" width="14" height="1" fill="#000058"/>
<rect x="739" y="765" width="14" height="1" fill="#000058"/>
<path d="M746.5 765.5 L746.5 820.5" stroke="#1212A4" stroke-width="1" fill="none" stroke-linecap="square"/>
<rect x="744" y="818" width="5" height="5" fill="#0000E8"/>
<path d="M765.5 685.5 L765.5 710.5 L790.5 698 Z" stroke="#000058" stroke-width="1.1" fill="none" shape-rendering="auto"/>
<rect x="768" y="691" width="5" height="1" fill="#000058"/>
<rect x="768" y="704" width="5" height="1" fill="#000058"/>
<rect x="770" y="702" width="1" height="5" fill="#000058"/>
<path d="M746.5 691.5 L765.5 691.5" stroke="#1212A4" stroke-width="1" fill="none" stroke-linecap="square"/>
<path d="M746.5 691.5 L746.5 665.5 L811.5 665.5 L811.5 697.5" stroke="#1212A4" stroke-width="1" fill="none" stroke-linecap="square"/>
<path d="M790.5 697.5 L853.5 697.5" stroke="#1212A4" stroke-width="1" fill="none" stroke-linecap="square"/>
<path d="M853 697.5 L856.3 691.3 L863 703.8 L869.7 691.3 L876.3 703.8 L879 697.5" stroke="#000058" stroke-width="1.1" fill="none" shape-rendering="auto"/>
<path d="M879.5 697.5 L935.5 697.5" stroke="#1212A4" stroke-width="1" fill="none" stroke-linecap="square"/>
<rect x="809" y="695" width="5" height="5" fill="#0000E8"/>
<path d="M778.5 691.5 L778.5 678.5 L830.5 678.5 L830.5 753.5" stroke="#1212A4" stroke-width="1" fill="none" stroke-linecap="square"/>
<circle cx="830.4" cy="765" r="12.2" fill="none" stroke="#000058" stroke-width="1.1"/>
<rect x="827" y="758" width="7" height="1" fill="#000058"/>
<rect x="830" y="755" width="1" height="7" fill="#000058"/>
<rect x="827" y="774" width="7" height="1" fill="#000058"/>
<path d="M830.5 777.5 L830.5 820.5" stroke="#1212A4" stroke-width="1" fill="none" stroke-linecap="square"/>
<path d="M778.5 703.5 L778.5 820.5" stroke="#1212A4" stroke-width="1" fill="none" stroke-linecap="square"/>
<rect x="776" y="818" width="5" height="5" fill="#0000E8"/>
<rect x="828" y="818" width="5" height="5" fill="#0000E8"/>
<rect x="779" y="689" width="5" height="1" fill="#000058"/>
<rect x="781" y="687" width="1" height="5" fill="#000058"/>
<rect x="780" y="706" width="6" height="1" fill="#000058"/>
<rect x="830" y="820" width="1" height="7" fill="#1212A4"/>
<rect x="830" y="820" width="1" height="8" fill="#1212A4"/>
<path d="M823.5 827.5 L837.5 827.5 L830.5 834.5 Z" stroke="#000058" stroke-width="1" fill="none" shape-rendering="auto"/>
<text transform="translate(56 430) scale(0.96 0.95)" x="0" y="0" font-size="10" fill="#000000" stroke="#000000" stroke-width="0.5" word-spacing="-0.5" textLength="81.77" lengthAdjust="spacing" text-anchor="start" letter-spacing="1.05" font-weight="bold" >.tran 0 1m 0 2n</text>
<text transform="translate(56 443) scale(0.96 0.95)" x="0" y="0" font-size="10" fill="#000000" stroke="#000000" stroke-width="0.5" word-spacing="-0.5" textLength="121.35" lengthAdjust="spacing" text-anchor="start" letter-spacing="1.05" font-weight="bold" >;ac dec 10k 400k 500k</text>
<text transform="translate(56 456) scale(0.96 0.95)" x="0" y="0" font-size="10" fill="#000000" stroke="#000000" stroke-width="0.5" word-spacing="-0.5" textLength="123.44" lengthAdjust="spacing" text-anchor="start" letter-spacing="1.05" font-weight="bold" >;ac dec 10k 6Meg 8Meg</text>
<text transform="translate(45 488) scale(0.96 0.95)" x="0" y="0" font-size="10" fill="#000000" stroke="#000000" stroke-width="0.5" word-spacing="-0.5" text-anchor="start" letter-spacing="1.05" font-weight="bold" >src</text>
<text transform="translate(87 482) scale(0.96 0.95)" x="0" y="0" font-size="10" fill="#000000" stroke="#000000" stroke-width="0.5" word-spacing="-0.5" text-anchor="middle" letter-spacing="1.05" font-weight="bold" >R1</text>
<text transform="translate(88 506) scale(0.96 0.95)" x="0" y="0" font-size="10" fill="#000000" stroke="#000000" stroke-width="0.5" word-spacing="-0.5" text-anchor="middle" letter-spacing="1.05" font-weight="bold" >50</text>
<text transform="translate(119 488) scale(0.96 0.95)" x="0" y="0" font-size="10" fill="#000000" stroke="#000000" stroke-width="0.5" word-spacing="-0.5" text-anchor="start" letter-spacing="1.05" font-weight="bold" >in</text>
<text transform="translate(172 482) scale(0.96 0.95)" x="0" y="0" font-size="10" fill="#000000" stroke="#000000" stroke-width="0.5" word-spacing="-0.5" text-anchor="middle" letter-spacing="1.05" font-weight="bold" >R7</text>
<text transform="translate(172 506) scale(0.96 0.95)" x="0" y="0" font-size="10" fill="#000000" stroke="#000000" stroke-width="0.5" word-spacing="-0.5" text-anchor="middle" letter-spacing="1.05" font-weight="bold" >330</text>
<text transform="translate(214 482) scale(0.96 0.95)" x="0" y="0" font-size="10" fill="#000000" stroke="#000000" stroke-width="0.5" word-spacing="-0.5" text-anchor="middle" letter-spacing="1.05" font-weight="bold" >C14</text>
<text transform="translate(214 506) scale(0.96 0.95)" x="0" y="0" font-size="10" fill="#000000" stroke="#000000" stroke-width="0.5" word-spacing="-0.5" text-anchor="middle" letter-spacing="1.05" font-weight="bold" >2.2n</text>
<text transform="translate(278 481) scale(0.96 0.95)" x="0" y="0" font-size="10" fill="#000000" stroke="#000000" stroke-width="0.5" word-spacing="-0.5" text-anchor="middle" letter-spacing="1.05" font-weight="bold" >C10</text>
<text transform="translate(278.5 505) scale(0.96 0.95)" x="0" y="0" font-size="10" fill="#000000" stroke="#000000" stroke-width="0.5" word-spacing="-0.5" text-anchor="middle" letter-spacing="1.05" font-weight="bold" >100p</text>
<text transform="translate(317.5 481) scale(0.96 0.95)" x="0" y="0" font-size="10" fill="#000000" stroke="#000000" stroke-width="0.5" word-spacing="-0.5" text-anchor="middle" letter-spacing="1.05" font-weight="bold" >X5</text>
<text transform="translate(317.5 505) scale(0.96 0.95)" x="0" y="0" font-size="10" fill="#000000" stroke="#000000" stroke-width="0.5" word-spacing="-0.5" text-anchor="middle" letter-spacing="1.05" font-weight="bold" >3.13p</text>
<text transform="translate(370.5 481) scale(0.96 0.95)" x="0" y="0" font-size="10" fill="#000000" stroke="#000000" stroke-width="0.5" word-spacing="-0.5" text-anchor="middle" letter-spacing="1.05" font-weight="bold" >X6</text>
<text transform="translate(370.5 505) scale(0.96 0.95)" x="0" y="0" font-size="10" fill="#000000" stroke="#000000" stroke-width="0.5" word-spacing="-0.5" text-anchor="middle" letter-spacing="1.05" font-weight="bold" >3.13p</text>
<text transform="translate(422.5 481) scale(0.96 0.95)" x="0" y="0" font-size="10" fill="#000000" stroke="#000000" stroke-width="0.5" word-spacing="-0.5" text-anchor="middle" letter-spacing="1.05" font-weight="bold" >X7</text>
<text transform="translate(422.5 505) scale(0.96 0.95)" x="0" y="0" font-size="10" fill="#000000" stroke="#000000" stroke-width="0.5" word-spacing="-0.5" text-anchor="middle" letter-spacing="1.05" font-weight="bold" >3.13p</text>
<text transform="translate(474.5 481) scale(0.96 0.95)" x="0" y="0" font-size="10" fill="#000000" stroke="#000000" stroke-width="0.5" word-spacing="-0.5" text-anchor="middle" letter-spacing="1.05" font-weight="bold" >X8</text>
<text transform="translate(474.5 505) scale(0.96 0.95)" x="0" y="0" font-size="10" fill="#000000" stroke="#000000" stroke-width="0.5" word-spacing="-0.5" text-anchor="middle" letter-spacing="1.05" font-weight="bold" >3.13p</text>
<text transform="translate(526.5 481) scale(0.96 0.95)" x="0" y="0" font-size="10" fill="#000000" stroke="#000000" stroke-width="0.5" word-spacing="-0.5" text-anchor="middle" letter-spacing="1.05" font-weight="bold" >X9</text>
<text transform="translate(526.5 505) scale(0.96 0.95)" x="0" y="0" font-size="10" fill="#000000" stroke="#000000" stroke-width="0.5" word-spacing="-0.5" text-anchor="middle" letter-spacing="1.05" font-weight="bold" >3.13p</text>
<text transform="translate(565 481) scale(0.96 0.95)" x="0" y="0" font-size="10" fill="#000000" stroke="#000000" stroke-width="0.5" word-spacing="-0.5" text-anchor="middle" letter-spacing="1.05" font-weight="bold" >C11</text>
<text transform="translate(565 505) scale(0.96 0.95)" x="0" y="0" font-size="10" fill="#000000" stroke="#000000" stroke-width="0.5" word-spacing="-0.5" text-anchor="middle" letter-spacing="1.05" font-weight="bold" >80p</text>
<text transform="translate(301 527) scale(0.96 0.95)" x="0" y="0" font-size="10" fill="#000000" stroke="#000000" stroke-width="0.5" word-spacing="-0.5" text-anchor="middle" letter-spacing="1.05" font-weight="bold" >R10</text>
<text transform="translate(301 551) scale(0.96 0.95)" x="0" y="0" font-size="10" fill="#000000" stroke="#000000" stroke-width="0.5" word-spacing="-0.5" text-anchor="middle" letter-spacing="1.05" font-weight="bold" >300k</text>
<text transform="translate(346 562) scale(0.96 0.95)" x="0" y="0" font-size="10" fill="#000000" stroke="#000000" stroke-width="0.5" word-spacing="-0.5" text-anchor="start" letter-spacing="1.05" font-weight="bold" >C9</text>
<text transform="translate(346 582) scale(0.96 0.95)" x="0" y="0" font-size="10" fill="#000000" stroke="#000000" stroke-width="0.5" word-spacing="-0.5" text-anchor="start" letter-spacing="1.05" font-weight="bold" >80p</text>
<text transform="translate(399 562) scale(0.96 0.95)" x="0" y="0" font-size="10" fill="#000000" stroke="#000000" stroke-width="0.5" word-spacing="-0.5" text-anchor="start" letter-spacing="1.05" font-weight="bold" >C15</text>
<text transform="translate(399 582) scale(0.96 0.95)" x="0" y="0" font-size="10" fill="#000000" stroke="#000000" stroke-width="0.5" word-spacing="-0.5" text-anchor="start" letter-spacing="1.05" font-weight="bold" >100p</text>
<text transform="translate(451 562) scale(0.96 0.95)" x="0" y="0" font-size="10" fill="#000000" stroke="#000000" stroke-width="0.5" word-spacing="-0.5" text-anchor="start" letter-spacing="1.05" font-weight="bold" >C13</text>
<text transform="translate(451 582) scale(0.96 0.95)" x="0" y="0" font-size="10" fill="#000000" stroke="#000000" stroke-width="0.5" word-spacing="-0.5" text-anchor="start" letter-spacing="1.05" font-weight="bold" >100p</text>
<text transform="translate(503 562) scale(0.96 0.95)" x="0" y="0" font-size="10" fill="#000000" stroke="#000000" stroke-width="0.5" word-spacing="-0.5" text-anchor="start" letter-spacing="1.05" font-weight="bold" >C12</text>
<text transform="translate(503 582) scale(0.96 0.95)" x="0" y="0" font-size="10" fill="#000000" stroke="#000000" stroke-width="0.5" word-spacing="-0.5" text-anchor="start" letter-spacing="1.05" font-weight="bold" >80p</text>
<text transform="translate(630 542) scale(0.96 0.95)" x="0" y="0" font-size="10" fill="#000000" stroke="#000000" stroke-width="0.5" word-spacing="-0.5" text-anchor="start" letter-spacing="1.05" font-weight="bold" >R11</text>
<text transform="translate(630 557) scale(0.96 0.95)" x="0" y="0" font-size="10" fill="#000000" stroke="#000000" stroke-width="0.5" word-spacing="-0.5" text-anchor="start" letter-spacing="1.05" font-weight="bold" >390</text>
<text transform="translate(700 482) scale(0.96 0.95)" x="0" y="0" font-size="10" fill="#000000" stroke="#000000" stroke-width="0.5" word-spacing="-0.5" text-anchor="middle" letter-spacing="1.05" font-weight="bold" >C6</text>
<text transform="translate(700 506) scale(0.96 0.95)" x="0" y="0" font-size="10" fill="#000000" stroke="#000000" stroke-width="0.5" word-spacing="-0.5" text-anchor="middle" letter-spacing="1.05" font-weight="bold" >2.2n</text>
<text transform="translate(728 487) scale(0.96 0.95)" x="0" y="0" font-size="10" fill="#000000" stroke="#000000" stroke-width="0.5" word-spacing="-0.5" text-anchor="start" letter-spacing="1.05" font-weight="bold" >rf</text>
<text transform="translate(700 521) scale(0.96 0.95)" x="0" y="0" font-size="10" fill="#000000" stroke="#000000" stroke-width="0.5" word-spacing="-0.5" text-anchor="middle" letter-spacing="1.05" font-weight="bold" >C8</text>
<text transform="translate(700 544) scale(0.96 0.95)" x="0" y="0" font-size="10" fill="#000000" stroke="#000000" stroke-width="0.5" word-spacing="-0.5" text-anchor="middle" letter-spacing="1.05" font-weight="bold" >2.2n</text>
<text transform="translate(725 526) scale(0.96 0.95)" x="0" y="0" font-size="10" fill="#000000" stroke="#000000" stroke-width="0.5" word-spacing="-0.5" text-anchor="start" letter-spacing="1.05" font-weight="bold" >vfo</text>
<text transform="translate(641 579) scale(0.96 0.95)" x="0" y="0" font-size="10" fill="#000000" stroke="#000000" stroke-width="0.5" word-spacing="-0.5" text-anchor="start" letter-spacing="1.05" font-weight="bold" >OSC</text>
<text transform="translate(639 592) scale(0.96 0.95)" x="0" y="0" font-size="10" fill="#000000" stroke="#000000" stroke-width="0.5" word-spacing="-0.5" textLength="134.90" lengthAdjust="spacing" text-anchor="start" letter-spacing="1.05" font-weight="bold" >SINE(0 300m 6.553Meg)</text>
<text transform="translate(785 562) scale(0.96 0.95)" x="0" y="0" font-size="10" fill="#000000" stroke="#000000" stroke-width="0.5" word-spacing="-0.5" text-anchor="start" letter-spacing="1.05" font-weight="bold" >R6</text>
<text transform="translate(785 577) scale(0.96 0.95)" x="0" y="0" font-size="10" fill="#000000" stroke="#000000" stroke-width="0.5" word-spacing="-0.5" text-anchor="start" letter-spacing="1.05" font-weight="bold" >20k</text>
<text transform="translate(824 562) scale(0.96 0.95)" x="0" y="0" font-size="10" fill="#000000" stroke="#000000" stroke-width="0.5" word-spacing="-0.5" text-anchor="start" letter-spacing="1.05" font-weight="bold" >R4</text>
<text transform="translate(824 577) scale(0.96 0.95)" x="0" y="0" font-size="10" fill="#000000" stroke="#000000" stroke-width="0.5" word-spacing="-0.5" text-anchor="start" letter-spacing="1.05" font-weight="bold" >1.5k</text>
<text transform="translate(799 527) scale(0.96 0.95)" x="0" y="0" font-size="10" fill="#000000" stroke="#000000" stroke-width="0.5" word-spacing="-0.5" textLength="120.83" lengthAdjust="spacing" text-anchor="start" letter-spacing="1.05" font-weight="bold" >V = V(rf) * V(vfo) * 99</text>
<text transform="translate(878 543) scale(0.96 0.95)" x="0" y="0" font-size="10" fill="#000000" stroke="#000000" stroke-width="0.5" word-spacing="-0.5" text-anchor="start" letter-spacing="1.05" font-weight="bold" >B1</text>
<text transform="translate(903.5 481) scale(0.96 0.95)" x="0" y="0" font-size="10" fill="#000000" stroke="#000000" stroke-width="0.5" word-spacing="-0.5" text-anchor="middle" letter-spacing="1.05" font-weight="bold" >R5</text>
<text transform="translate(903 505) scale(0.96 0.95)" x="0" y="0" font-size="10" fill="#000000" stroke="#000000" stroke-width="0.5" word-spacing="-0.5" text-anchor="middle" letter-spacing="1.05" font-weight="bold" >1.5k</text>
<text transform="translate(941 487) scale(0.96 0.95)" x="0" y="0" font-size="10" fill="#000000" stroke="#000000" stroke-width="0.5" word-spacing="-0.5" text-anchor="start" letter-spacing="1.05" font-weight="bold" >out+</text>
<text transform="translate(955 556) scale(0.96 0.95)" x="0" y="0" font-size="10" fill="#000000" stroke="#000000" stroke-width="0.5" word-spacing="-0.5" text-anchor="start" letter-spacing="1.05" font-weight="bold" >C7</text>
<text transform="translate(949 575) scale(0.96 0.95)" x="0" y="0" font-size="10" fill="#000000" stroke="#000000" stroke-width="0.5" word-spacing="-0.5" text-anchor="start" letter-spacing="1.05" font-weight="bold" >10n</text>
<text transform="translate(11 523) scale(0.96 0.95)" x="0" y="0" font-size="10" fill="#000000" stroke="#000000" stroke-width="0.5" word-spacing="-0.5" text-anchor="start" letter-spacing="1.05" font-weight="bold" >V1</text>
<text transform="translate(9.5 536) scale(0.96 0.95)" x="0" y="0" font-size="10" fill="#000000" stroke="#000000" stroke-width="0.5" word-spacing="-0.5" textLength="101.56" lengthAdjust="spacing" text-anchor="start" letter-spacing="1.05" font-weight="bold" >SINE(0 20m 7Meg)</text>
<text transform="translate(11 563) scale(0.96 0.95)" x="0" y="0" font-size="10" fill="#000000" stroke="#000000" stroke-width="0.5" word-spacing="-0.5" text-anchor="start" letter-spacing="1.05" font-weight="bold" >V2</text>
<text transform="translate(9.5 575) scale(0.96 0.95)" x="0" y="0" font-size="10" fill="#000000" stroke="#000000" stroke-width="0.5" word-spacing="-0.5" textLength="117.19" lengthAdjust="spacing" text-anchor="start" letter-spacing="1.05" font-weight="bold" >SINE(0 200m 10Meg)</text>
<text transform="translate(11 601) scale(0.96 0.95)" x="0" y="0" font-size="10" fill="#000000" stroke="#000000" stroke-width="0.5" word-spacing="-0.5" text-anchor="start" letter-spacing="1.05" font-weight="bold" >V3</text>
<text transform="translate(9.5 614) scale(0.96 0.95)" x="0" y="0" font-size="10" fill="#000000" stroke="#000000" stroke-width="0.5" word-spacing="-0.5" textLength="119.79" lengthAdjust="spacing" text-anchor="start" letter-spacing="1.05" font-weight="bold" >SINE(0 40m 10.1Meg)</text>
<text transform="translate(145 555) scale(0.96 0.95)" x="0" y="0" font-size="10" fill="#000000" stroke="#000000" stroke-width="0.5" word-spacing="-0.5" text-anchor="start" letter-spacing="1.05" font-weight="bold" >R13</text>
<text transform="translate(145 569) scale(0.96 0.95)" x="0" y="0" font-size="10" fill="#000000" stroke="#000000" stroke-width="0.5" word-spacing="-0.5" text-anchor="start" letter-spacing="1.05" font-weight="bold" >56</text>
<text transform="translate(105 695) scale(0.96 0.95)" x="0" y="0" font-size="10" fill="#000000" stroke="#000000" stroke-width="0.5" word-spacing="-0.5" text-anchor="middle" letter-spacing="1.05" font-weight="bold" >C2</text>
<text transform="translate(104 718) scale(0.96 0.95)" x="0" y="0" font-size="10" fill="#000000" stroke="#000000" stroke-width="0.5" word-spacing="-0.5" text-anchor="middle" letter-spacing="1.05" font-weight="bold" >390p</text>
<text transform="translate(136.5 695) scale(0.96 0.95)" x="0" y="0" font-size="10" fill="#000000" stroke="#000000" stroke-width="0.5" word-spacing="-0.5" text-anchor="middle" letter-spacing="1.05" font-weight="bold" >X1</text>
<text transform="translate(137 718) scale(0.96 0.95)" x="0" y="0" font-size="10" fill="#000000" stroke="#000000" stroke-width="0.5" word-spacing="-0.5" text-anchor="middle" letter-spacing="1.05" font-weight="bold" >16.4p</text>
<text transform="translate(189 695) scale(0.96 0.95)" x="0" y="0" font-size="10" fill="#000000" stroke="#000000" stroke-width="0.5" word-spacing="-0.5" text-anchor="middle" letter-spacing="1.05" font-weight="bold" >X2</text>
<text transform="translate(189 718) scale(0.96 0.95)" x="0" y="0" font-size="10" fill="#000000" stroke="#000000" stroke-width="0.5" word-spacing="-0.5" text-anchor="middle" letter-spacing="1.05" font-weight="bold" >16.4p</text>
<text transform="translate(241 695) scale(0.96 0.95)" x="0" y="0" font-size="10" fill="#000000" stroke="#000000" stroke-width="0.5" word-spacing="-0.5" text-anchor="middle" letter-spacing="1.05" font-weight="bold" >X3</text>
<text transform="translate(241 718) scale(0.96 0.95)" x="0" y="0" font-size="10" fill="#000000" stroke="#000000" stroke-width="0.5" word-spacing="-0.5" text-anchor="middle" letter-spacing="1.05" font-weight="bold" >16.4p</text>
<text transform="translate(293 695) scale(0.96 0.95)" x="0" y="0" font-size="10" fill="#000000" stroke="#000000" stroke-width="0.5" word-spacing="-0.5" text-anchor="middle" letter-spacing="1.05" font-weight="bold" >X4</text>
<text transform="translate(293 718) scale(0.96 0.95)" x="0" y="0" font-size="10" fill="#000000" stroke="#000000" stroke-width="0.5" word-spacing="-0.5" text-anchor="middle" letter-spacing="1.05" font-weight="bold" >16.4p</text>
<text transform="translate(325 695) scale(0.96 0.95)" x="0" y="0" font-size="10" fill="#000000" stroke="#000000" stroke-width="0.5" word-spacing="-0.5" text-anchor="middle" letter-spacing="1.05" font-weight="bold" >C3</text>
<text transform="translate(325 718) scale(0.96 0.95)" x="0" y="0" font-size="10" fill="#000000" stroke="#000000" stroke-width="0.5" word-spacing="-0.5" text-anchor="middle" letter-spacing="1.05" font-weight="bold" >390p</text>
<text transform="translate(121 740) scale(0.96 0.95)" x="0" y="0" font-size="10" fill="#000000" stroke="#000000" stroke-width="0.5" word-spacing="-0.5" text-anchor="middle" letter-spacing="1.05" font-weight="bold" >R3</text>
<text transform="translate(120.5 764) scale(0.96 0.95)" x="0" y="0" font-size="10" fill="#000000" stroke="#000000" stroke-width="0.5" word-spacing="-0.5" text-anchor="middle" letter-spacing="1.05" font-weight="bold" >100k</text>
<text transform="translate(165.5 776) scale(0.96 0.95)" x="0" y="0" font-size="10" fill="#000000" stroke="#000000" stroke-width="0.5" word-spacing="-0.5" text-anchor="start" letter-spacing="1.05" font-weight="bold" >C1</text>
<text transform="translate(165.5 795) scale(0.96 0.95)" x="0" y="0" font-size="10" fill="#000000" stroke="#000000" stroke-width="0.5" word-spacing="-0.5" text-anchor="start" letter-spacing="1.05" font-weight="bold" >330p</text>
<text transform="translate(218 776) scale(0.96 0.95)" x="0" y="0" font-size="10" fill="#000000" stroke="#000000" stroke-width="0.5" word-spacing="-0.5" text-anchor="start" letter-spacing="1.05" font-weight="bold" >C5</text>
<text transform="translate(218 795) scale(0.96 0.95)" x="0" y="0" font-size="10" fill="#000000" stroke="#000000" stroke-width="0.5" word-spacing="-0.5" text-anchor="start" letter-spacing="1.05" font-weight="bold" >390p</text>
<text transform="translate(270 776) scale(0.96 0.95)" x="0" y="0" font-size="10" fill="#000000" stroke="#000000" stroke-width="0.5" word-spacing="-0.5" text-anchor="start" letter-spacing="1.05" font-weight="bold" >C4</text>
<text transform="translate(270 795) scale(0.96 0.95)" x="0" y="0" font-size="10" fill="#000000" stroke="#000000" stroke-width="0.5" word-spacing="-0.5" text-anchor="start" letter-spacing="1.05" font-weight="bold" >330p</text>
<text transform="translate(398 695) scale(0.96 0.95)" x="0" y="0" font-size="10" fill="#000000" stroke="#000000" stroke-width="0.5" word-spacing="-0.5" text-anchor="middle" letter-spacing="1.05" font-weight="bold" >R12</text>
<text transform="translate(398 718) scale(0.96 0.95)" x="0" y="0" font-size="10" fill="#000000" stroke="#000000" stroke-width="0.5" word-spacing="-0.5" text-anchor="middle" letter-spacing="1.05" font-weight="bold" >330</text>
<text transform="translate(441.5 695) scale(0.96 0.95)" x="0" y="0" font-size="10" fill="#000000" stroke="#000000" stroke-width="0.5" word-spacing="-0.5" text-anchor="middle" letter-spacing="1.05" font-weight="bold" >C19</text>
<text transform="translate(441.5 718) scale(0.96 0.95)" x="0" y="0" font-size="10" fill="#000000" stroke="#000000" stroke-width="0.5" word-spacing="-0.5" text-anchor="middle" letter-spacing="1.05" font-weight="bold" >10n</text>
<text transform="translate(449.5 750) scale(0.96 0.95)" x="0" y="0" font-size="10" fill="#000000" stroke="#000000" stroke-width="0.5" word-spacing="-0.5" text-anchor="start" letter-spacing="1.05" font-weight="bold" >C18</text>
<text transform="translate(444.5 769) scale(0.96 0.95)" x="0" y="0" font-size="10" fill="#000000" stroke="#000000" stroke-width="0.5" word-spacing="-0.5" text-anchor="start" letter-spacing="1.05" font-weight="bold" >100p</text>
<text transform="translate(502.5 702) scale(0.96 0.95)" x="0" y="0" font-size="10" fill="#000000" stroke="#000000" stroke-width="0.5" word-spacing="-0.5" textLength="32.29" lengthAdjust="spacing" text-anchor="start" letter-spacing="1.05" font-weight="bold" >rec_in</text>
<text transform="translate(546 743) scale(0.96 0.95)" x="0" y="0" font-size="10" fill="#000000" stroke="#000000" stroke-width="0.5" word-spacing="-0.5" text-anchor="start" letter-spacing="1.05" font-weight="bold" >R2</text>
<text transform="translate(546 758) scale(0.96 0.95)" x="0" y="0" font-size="10" fill="#000000" stroke="#000000" stroke-width="0.5" word-spacing="-0.5" text-anchor="start" letter-spacing="1.05" font-weight="bold" >1.15k</text>
<text transform="translate(584 702) scale(0.96 0.95)" x="0" y="0" font-size="10" fill="#000000" stroke="#000000" stroke-width="0.5" word-spacing="-0.5" textLength="39.06" lengthAdjust="spacing" text-anchor="start" letter-spacing="1.05" font-weight="bold" >rec_out</text>
<text transform="translate(556 786) scale(0.96 0.95)" x="0" y="0" font-size="10" fill="#000000" stroke="#000000" stroke-width="0.5" word-spacing="-0.5" text-anchor="start" letter-spacing="1.05" font-weight="bold" >B2</text>
<text transform="translate(463 800) scale(0.96 0.95)" x="0" y="0" font-size="10" fill="#000000" stroke="#000000" stroke-width="0.5" word-spacing="-0.5" text-anchor="start" letter-spacing="1.05" font-weight="bold" >V = 2.66 + 0.219 * log(20u + abs(v(rec_in)))</text>
<text transform="translate(657 694) scale(0.96 0.95)" x="0" y="0" font-size="10" fill="#000000" stroke="#000000" stroke-width="0.5" word-spacing="-0.5" text-anchor="middle" letter-spacing="1.05" font-weight="bold" >R8</text>
<text transform="translate(657 718) scale(0.96 0.95)" x="0" y="0" font-size="10" fill="#000000" stroke="#000000" stroke-width="0.5" word-spacing="-0.5" text-anchor="middle" letter-spacing="1.05" font-weight="bold" >1k</text>
<text transform="translate(716 694) scale(0.96 0.95)" x="0" y="0" font-size="10" fill="#000000" stroke="#000000" stroke-width="0.5" word-spacing="-0.5" text-anchor="middle" letter-spacing="1.05" font-weight="bold" >R9</text>
<text transform="translate(716 718) scale(0.96 0.95)" x="0" y="0" font-size="10" fill="#000000" stroke="#000000" stroke-width="0.5" word-spacing="-0.5" text-anchor="middle" letter-spacing="1.05" font-weight="bold" >10k</text>
<text transform="translate(691 756) scale(0.96 0.95)" x="0" y="0" font-size="10" fill="#000000" stroke="#000000" stroke-width="0.5" word-spacing="-0.5" text-anchor="start" letter-spacing="1.05" font-weight="bold" >C16</text>
<text transform="translate(691 775) scale(0.96 0.95)" x="0" y="0" font-size="10" fill="#000000" stroke="#000000" stroke-width="0.5" word-spacing="-0.5" text-anchor="start" letter-spacing="1.05" font-weight="bold" >33n</text>
<text transform="translate(748.5 756) scale(0.96 0.95)" x="0" y="0" font-size="10" fill="#000000" stroke="#000000" stroke-width="0.5" word-spacing="-0.5" text-anchor="start" letter-spacing="1.05" font-weight="bold" >C17</text>
<text transform="translate(748.5 775) scale(0.96 0.95)" x="0" y="0" font-size="10" fill="#000000" stroke="#000000" stroke-width="0.5" word-spacing="-0.5" text-anchor="start" letter-spacing="1.05" font-weight="bold" >3.3n</text>
<text transform="translate(785 689) scale(0.96 0.95)" x="0" y="0" font-size="10" fill="#000000" stroke="#000000" stroke-width="0.5" word-spacing="-0.5" text-anchor="start" letter-spacing="1.05" font-weight="bold" >U1</text>
<text transform="translate(785 714) scale(0.96 0.95)" x="0" y="0" font-size="10" fill="#000000" stroke="#000000" stroke-width="0.5" word-spacing="-0.5" textLength="42.19" lengthAdjust="spacing" text-anchor="start" letter-spacing="1.05" font-weight="bold" >LT1006</text>
<text transform="translate(865 689) scale(0.96 0.95)" x="0" y="0" font-size="10" fill="#000000" stroke="#000000" stroke-width="0.5" word-spacing="-0.5" text-anchor="middle" letter-spacing="1.05" font-weight="bold" >R14</text>
<text transform="translate(865 712) scale(0.96 0.95)" x="0" y="0" font-size="10" fill="#000000" stroke="#000000" stroke-width="0.5" word-spacing="-0.5" text-anchor="middle" letter-spacing="1.05" font-weight="bold" >100</text>
<text transform="translate(892 694) scale(0.96 0.95)" x="0" y="0" font-size="10" fill="#000000" stroke="#000000" stroke-width="0.5" word-spacing="-0.5" textLength="44.27" lengthAdjust="spacing" text-anchor="start" letter-spacing="1.05" font-weight="bold" >dbm_out</text>
<text transform="translate(839.5 753) scale(0.96 0.95)" x="0" y="0" font-size="10" fill="#000000" stroke="#000000" stroke-width="0.5" word-spacing="-0.5" text-anchor="start" letter-spacing="1.05" font-weight="bold" >V4</text>
<text transform="translate(839.5 785) scale(0.96 0.95)" x="0" y="0" font-size="10" fill="#000000" stroke="#000000" stroke-width="0.5" word-spacing="-0.5" text-anchor="start" letter-spacing="1.05" font-weight="bold" >5V</text>
</svg>
</body></html>
